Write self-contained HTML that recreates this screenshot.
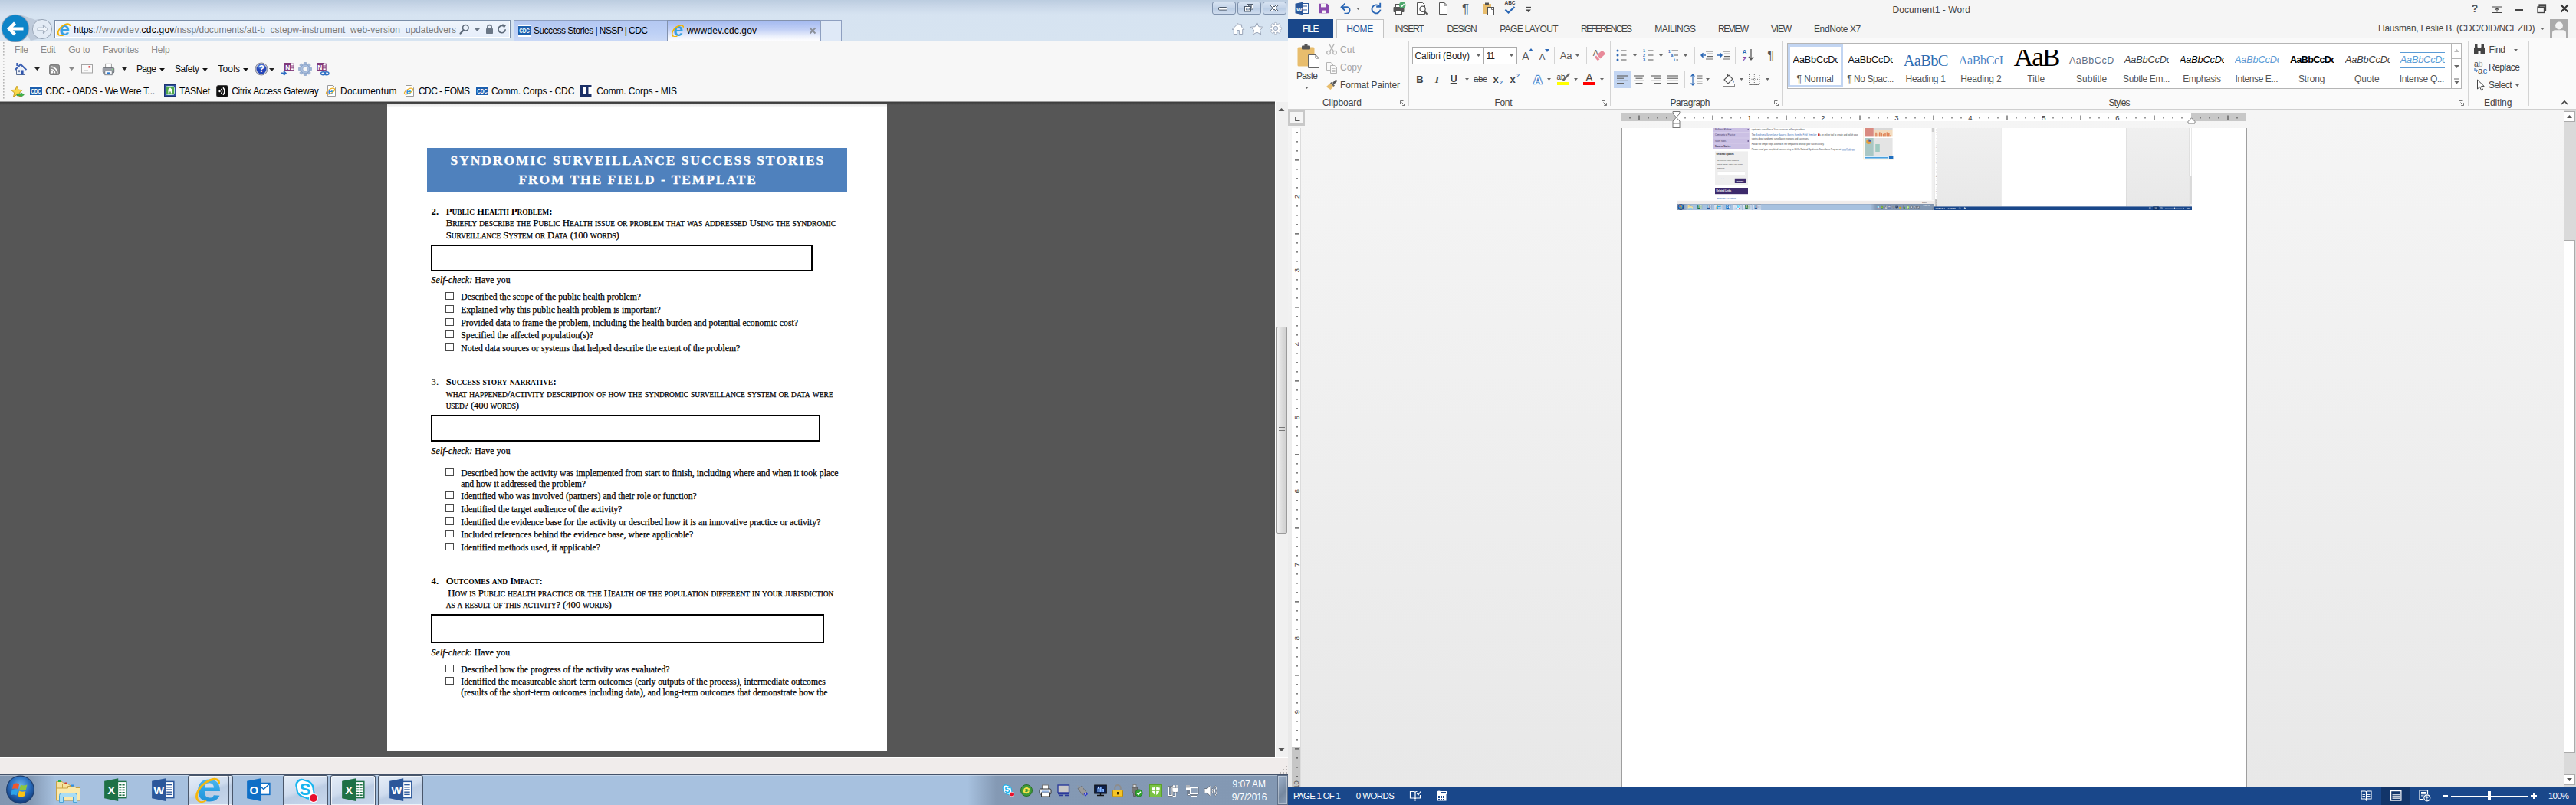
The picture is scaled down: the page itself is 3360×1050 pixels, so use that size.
<!DOCTYPE html>
<html><head><meta charset="utf-8"><title>Desktop</title>
<style>
html,body{margin:0;padding:0;}
body{width:3360px;height:1050px;position:relative;overflow:hidden;background:#fff;font-family:"Liberation Sans",sans-serif;}
.a{position:absolute;display:block;}
.t{white-space:pre;}
</style></head><body>
<div class="a" style="left:0px;top:0px;width:3360px;height:1050px;background:#fff;"></div>
<div class="a" style="left:0px;top:0px;width:1680px;height:53px;background:linear-gradient(#bccde0 0px,#cad8e9 9px,#d6e3f1 19px,#d7e4f1 53px);"></div>
<div class="a" style="left:0px;top:53px;width:1680px;height:1px;background:#8d9bb2;"></div>
<div class="a" style="left:0px;top:54px;width:1680px;height:79px;background:#f7f7f7;"></div>
<div class="a" style="left:1581px;top:2px;width:31px;height:17px;background:linear-gradient(#d6e2f1,#c3d3e8 50%,#b9cce4 51%,#cfdcee);border:1px solid #7f92ad;box-sizing:border-box;border-radius:3px;"></div>
<div class="a" style="left:1614px;top:2px;width:31px;height:17px;background:linear-gradient(#d6e2f1,#c3d3e8 50%,#b9cce4 51%,#cfdcee);border:1px solid #7f92ad;box-sizing:border-box;border-radius:3px;"></div>
<div class="a" style="left:1647px;top:2px;width:31px;height:17px;background:linear-gradient(#d6e2f1,#c3d3e8 50%,#b9cce4 51%,#cfdcee);border:1px solid #7f92ad;box-sizing:border-box;border-radius:3px;"></div>
<svg class="a" style="left:1589px;top:7px;" width="14" height="8" viewBox="0 0 14 8"><rect x="0.5" y="2.5" width="11" height="3.6" rx="1" fill="#fff" stroke="#4d5a6b"/></svg>
<svg class="a" style="left:1623px;top:4px;" width="14" height="13" viewBox="0 0 14 13"><rect x="3.5" y="1.5" width="8" height="6.5" fill="#fff" stroke="#4d5a6b"/><rect x="5.6" y="3.6" width="3.8" height="2.3" fill="#c3d3e8" stroke="#4d5a6b" stroke-width=".6"/><rect x="0.5" y="4.5" width="8" height="6.5" fill="#fff" stroke="#4d5a6b"/><rect x="2.6" y="6.8" width="3.8" height="2.2" fill="#c3d3e8" stroke="#4d5a6b" stroke-width=".6"/></svg>
<svg class="a" style="left:1655px;top:5px;" width="14" height="11" viewBox="0 0 14 11"><path d="M1.5 1.5H4.6L7 4 9.4 1.5H12.5L8.8 5.5 12.5 9.5H9.4L7 7 4.6 9.5H1.5L5.2 5.5Z" fill="#fff" stroke="#4d5a6b" stroke-linejoin="round"/></svg>
<svg class="a" style="left:0px;top:17px;" width="72" height="38" viewBox="0 0 72 38"><path d="M20 2 C30 2 38 6 46 9 C52 7 60 8 66 13 L66 30 L40 36 Z" fill="#b7c3d3" opacity=".75"/><circle cx="20" cy="20" r="18.3" fill="#8fa3bb"/><circle cx="20" cy="20" r="17.3" fill="#0d84c8"/><path d="M30.5 20.5H12.5M19.5 13L12 20.5L19.5 28" fill="none" stroke="#fff" stroke-width="4.2" stroke-linecap="butt" stroke-linejoin="miter"/><circle cx="55" cy="21" r="12.6" fill="#e3ebf5" stroke="#9aa7b8" stroke-width="1"/><path d="M49 21H60.5M56 16L61 21L56 26" fill="none" stroke="#9aa7b8" stroke-width="1.3"/><path d="M49 19.2H56.5V15.2L62.3 21L56.5 26.8V22.8H49Z" fill="#eef3f9" stroke="#a3afbf" stroke-width="1"/></svg>
<div class="a" style="left:71px;top:26px;width:595px;height:24px;background:#eaf1fb;border:1px solid #7b8ea8;box-sizing:border-box;"></div>
<div class="a" style="left:72px;top:27px;width:593px;height:22px;background:linear-gradient(#eef4fc,#e6eefa);border:1px solid #fff;box-sizing:border-box;"></div>
<svg class="a" style="left:74.5px;top:29.5px;" width="17" height="17" viewBox="0 0 16 16"><text x="8.600" y="15" text-anchor="middle" font-family="Liberation Sans, sans-serif" font-weight="700" font-size="23" fill="#3aa0e2">e</text><path d="M2.400 15.300C-1.800 12.500 2.500 4.500 9 1.800C12.500 .400 15.600 1 15.500 3.800" fill="none" stroke="#f5b400" stroke-width="1.600"/><path d="M2.400 15.300C4 16.200 6 15.600 7.500 14.800" fill="none" stroke="#f5b400" stroke-width="1.200"/></svg>
<span class="a t" style="left:96.20px;top:32.00px;line-height:16px;font:400 12px 'Liberation Sans', sans-serif;color:#000;letter-spacing:-0.229px;">https</span>
<span class="a t" style="left:121.30px;top:32.00px;line-height:16px;font:400 12px 'Liberation Sans', sans-serif;color:#7a7a7a;letter-spacing:0.600px;">://wwwdev.</span>
<span class="a t" style="left:184.50px;top:32.00px;line-height:16px;font:400 12px 'Liberation Sans', sans-serif;color:#000;letter-spacing:0.240px;">cdc.gov</span>
<span class="a t" style="left:227.30px;top:32.00px;line-height:16px;font:400 12px 'Liberation Sans', sans-serif;color:#7a7a7a;letter-spacing:0.024px;">/nssp/documents/att-b_cstepw-instrument_web-version_updatedvers</span>
<svg class="a" style="left:599px;top:31px;" width="14" height="14" viewBox="0 0 14 14"><circle cx="8.3" cy="5.3" r="3.8" fill="none" stroke="#5e6b7a" stroke-width="1.6"/><path d="M5.6 8.2L1.6 12.6" stroke="#5e6b7a" stroke-width="2.2" stroke-linecap="round"/></svg>
<svg class="a" style="left:619.0px;top:36.5px;" width="7" height="4" viewBox="0 0 7 4"><path d="M0 0H7L3.5 4Z" fill="#6b7786"/></svg>
<svg class="a" style="left:633px;top:31px;" width="11" height="14" viewBox="0 0 11 14"><path d="M2.8 6.5V4.3A2.7 2.7 0 0 1 8.2 4.3V6.5" fill="none" stroke="#6b7786" stroke-width="1.6"/><rect x="1" y="6" width="9" height="7" rx=".8" fill="#6b7786"/></svg>
<svg class="a" style="left:648px;top:31px;" width="14" height="14" viewBox="0 0 14 14"><path d="M11.2 7.2A4.6 4.6 0 1 1 8.8 3.1" fill="none" stroke="#5e6b7a" stroke-width="1.7"/><path d="M7.2 0.2L12.3 1.6 9.3 6Z" fill="#5e6b7a"/></svg>
<div class="a" style="left:670px;top:26px;width:201px;height:27px;background:linear-gradient(#b4c8f2,#bdd0f5 60%,#c9d8f6);border:1px solid #8e9fc0;box-sizing:border-box;border-bottom:none;"></div>
<div class="a" style="left:676px;top:32px;width:16px;height:16px;background:#fff;"></div>
<div class="a" style="left:676px;top:34px;width:16px;height:11px;background:#1c5fae;"></div>
<svg class="a" style="left:676px;top:34px;" width="16" height="11" viewBox="0 0 16 11"><text x="1.200" y="8.700" textLength="13.600" lengthAdjust="spacingAndGlyphs" font-family="Liberation Sans, sans-serif" font-weight="700" font-size="9.500" fill="#fff">CDC</text></svg>
<span class="a t" style="left:696.00px;top:33.00px;line-height:16px;font:400 12px 'Liberation Sans', sans-serif;color:#000;letter-spacing:-0.558px;">Success Stories | NSSP | CDC</span>
<div class="a" style="left:870px;top:26px;width:201px;height:27px;background:linear-gradient(#a3b9f0 0,#c3d1f6 45%,#eef2fc 80%,#fdfdff 100%);border:1px solid #8392ad;box-sizing:border-box;border-bottom:none;"></div>
<svg class="a" style="left:876.0px;top:32.0px;" width="16" height="16" viewBox="0 0 16 16"><text x="8.600" y="15" text-anchor="middle" font-family="Liberation Sans, sans-serif" font-weight="700" font-size="23" fill="#3aa0e2">e</text><path d="M2.400 15.300C-1.800 12.500 2.500 4.500 9 1.800C12.500 .400 15.600 1 15.500 3.800" fill="none" stroke="#f5b400" stroke-width="1.600"/><path d="M2.400 15.300C4 16.200 6 15.600 7.500 14.800" fill="none" stroke="#f5b400" stroke-width="1.200"/></svg>
<span class="a t" style="left:896.00px;top:33.00px;line-height:16px;font:400 12px 'Liberation Sans', sans-serif;color:#000;letter-spacing:0.142px;">wwwdev.cdc.gov</span>
<svg class="a" style="left:1055px;top:35px;" width="10" height="10" viewBox="0 0 10 10"><path d="M1.5 1.5L8.5 8.5M8.5 1.5L1.5 8.5" stroke="#8a8f98" stroke-width="1.8"/></svg>
<div class="a" style="left:1070px;top:26px;width:28px;height:27px;background:#dfe9f7;border:1px solid #8e9fc0;box-sizing:border-box;border-bottom:none;"></div>
<svg class="a" style="left:1606px;top:29px;" width="18" height="17" viewBox="0 0 18 17"><path d="M9 1.500L1.200 9.300H3.300V15.500H7.600V10.500H10.400V15.500H14.700V9.300H16.800L13.600 6.100V3H11.800V4.300Z" fill="#fff" stroke="#9aa5b8" stroke-width="1" stroke-linejoin="round"/></svg>
<svg class="a" style="left:1630px;top:28px;" width="19" height="18" viewBox="0 0 19 18"><path d="M9.500 1.300L11.900 6.700 17.800 7.300 13.400 11.200 14.700 17 9.500 14 4.300 17 5.600 11.200 1.200 7.300 7.100 6.700Z" fill="#fff" stroke="#9aa5b8" stroke-width="1" stroke-linejoin="round"/></svg>
<svg class="a" style="left:1655px;top:28px;" width="18" height="18" viewBox="0 0 18 18"><rect x="7.300" y="1.400" width="3.400" height="4" rx="1.200" transform="rotate(0 9 9)" fill="#fff" stroke="#9aa5b8" stroke-width=".9"/><rect x="7.300" y="1.400" width="3.400" height="4" rx="1.200" transform="rotate(45 9 9)" fill="#fff" stroke="#9aa5b8" stroke-width=".9"/><rect x="7.300" y="1.400" width="3.400" height="4" rx="1.200" transform="rotate(90 9 9)" fill="#fff" stroke="#9aa5b8" stroke-width=".9"/><rect x="7.300" y="1.400" width="3.400" height="4" rx="1.200" transform="rotate(135 9 9)" fill="#fff" stroke="#9aa5b8" stroke-width=".9"/><rect x="7.300" y="1.400" width="3.400" height="4" rx="1.200" transform="rotate(180 9 9)" fill="#fff" stroke="#9aa5b8" stroke-width=".9"/><rect x="7.300" y="1.400" width="3.400" height="4" rx="1.200" transform="rotate(225 9 9)" fill="#fff" stroke="#9aa5b8" stroke-width=".9"/><rect x="7.300" y="1.400" width="3.400" height="4" rx="1.200" transform="rotate(270 9 9)" fill="#fff" stroke="#9aa5b8" stroke-width=".9"/><rect x="7.300" y="1.400" width="3.400" height="4" rx="1.200" transform="rotate(315 9 9)" fill="#fff" stroke="#9aa5b8" stroke-width=".9"/><circle cx="9" cy="9" r="5.700" fill="#fff" stroke="#9aa5b8" stroke-width=".9"/><rect x="7.800" y="1.900" width="2.400" height="4" transform="rotate(0 9 9)" fill="#fff"/><rect x="7.800" y="1.900" width="2.400" height="4" transform="rotate(45 9 9)" fill="#fff"/><rect x="7.800" y="1.900" width="2.400" height="4" transform="rotate(90 9 9)" fill="#fff"/><rect x="7.800" y="1.900" width="2.400" height="4" transform="rotate(135 9 9)" fill="#fff"/><rect x="7.800" y="1.900" width="2.400" height="4" transform="rotate(180 9 9)" fill="#fff"/><rect x="7.800" y="1.900" width="2.400" height="4" transform="rotate(225 9 9)" fill="#fff"/><rect x="7.800" y="1.900" width="2.400" height="4" transform="rotate(270 9 9)" fill="#fff"/><rect x="7.800" y="1.900" width="2.400" height="4" transform="rotate(315 9 9)" fill="#fff"/><circle cx="9" cy="9" r="2.700" fill="#dce6f4" stroke="#9aa5b8" stroke-width=".9"/></svg>
<svg class="a" style="left:4px;top:55px;" width="3" height="76" viewBox="0 0 3 76"><rect x="0" y="0" width="1.6" height="1.6" fill="#b5b5b5"/><rect x="0" y="4" width="1.6" height="1.6" fill="#b5b5b5"/><rect x="0" y="8" width="1.6" height="1.6" fill="#b5b5b5"/><rect x="0" y="12" width="1.6" height="1.6" fill="#b5b5b5"/><rect x="0" y="16" width="1.6" height="1.6" fill="#b5b5b5"/><rect x="0" y="20" width="1.6" height="1.6" fill="#b5b5b5"/><rect x="0" y="24" width="1.6" height="1.6" fill="#b5b5b5"/><rect x="0" y="28" width="1.6" height="1.6" fill="#b5b5b5"/><rect x="0" y="32" width="1.6" height="1.6" fill="#b5b5b5"/><rect x="0" y="36" width="1.6" height="1.6" fill="#b5b5b5"/><rect x="0" y="40" width="1.6" height="1.6" fill="#b5b5b5"/><rect x="0" y="44" width="1.6" height="1.6" fill="#b5b5b5"/><rect x="0" y="48" width="1.6" height="1.6" fill="#b5b5b5"/><rect x="0" y="52" width="1.6" height="1.6" fill="#b5b5b5"/><rect x="0" y="56" width="1.6" height="1.6" fill="#b5b5b5"/><rect x="0" y="60" width="1.6" height="1.6" fill="#b5b5b5"/><rect x="0" y="64" width="1.6" height="1.6" fill="#b5b5b5"/><rect x="0" y="68" width="1.6" height="1.6" fill="#b5b5b5"/><rect x="0" y="72" width="1.6" height="1.6" fill="#b5b5b5"/></svg>
<span class="a t" style="left:19.00px;top:58.00px;line-height:16px;font:400 12px 'Liberation Sans', sans-serif;color:#8b8b8b;letter-spacing:-0.448px;">File</span>
<span class="a t" style="left:53.00px;top:58.00px;line-height:16px;font:400 12px 'Liberation Sans', sans-serif;color:#8b8b8b;letter-spacing:-0.329px;">Edit</span>
<span class="a t" style="left:89.30px;top:58.00px;line-height:16px;font:400 12px 'Liberation Sans', sans-serif;color:#8b8b8b;letter-spacing:-0.315px;">Go to</span>
<span class="a t" style="left:134.30px;top:58.00px;line-height:16px;font:400 12px 'Liberation Sans', sans-serif;color:#8b8b8b;letter-spacing:-0.332px;">Favorites</span>
<span class="a t" style="left:197.30px;top:58.00px;line-height:16px;font:400 12px 'Liberation Sans', sans-serif;color:#8b8b8b;letter-spacing:-0.096px;">Help</span>
<svg class="a" style="left:18px;top:81px;" width="18" height="18" viewBox="0 0 18 18"><path d="M3.500 9V16.500H14.500V9L9 3.500Z" fill="#eef1f7" stroke="#5b6f96" stroke-width="1"/><path d="M9 1.400L.800 9.600 2.200 10.800 9 4.200 15.800 10.800 17.200 9.600Z" fill="#3d62b5"/><rect x="3.300" y="1" width="2.200" height="4" fill="#3d62b5"/><rect x="9.800" y="10.500" width="2.800" height="6" fill="#2f55ad"/><rect x="5.300" y="10.300" width="2.800" height="2.800" fill="#6f83ad"/></svg>
<svg class="a" style="left:44.5px;top:88.0px;" width="7" height="4" viewBox="0 0 7 4"><path d="M0 0H7L3.5 4Z" fill="#222"/></svg>
<svg class="a" style="left:64px;top:83.5px;" width="14" height="14" viewBox="0 0 16 16"><rect x=".5" y=".5" width="15" height="15" rx="2.5" fill="#8d8d8d" stroke="#6f6f6f"/><circle cx="4.3" cy="11.8" r="1.7" fill="#fff"/><path d="M2.8 7.4A5.8 5.8 0 0 1 8.7 13.2M2.8 3.6A9.6 9.6 0 0 1 12.5 13.2" fill="none" stroke="#fff" stroke-width="1.8"/></svg>
<svg class="a" style="left:89.5px;top:88.0px;" width="7" height="4" viewBox="0 0 7 4"><path d="M0 0H7L3.5 4Z" fill="#8a8a8a"/></svg>
<svg class="a" style="left:106px;top:84px;" width="15" height="12" viewBox="0 0 15 12"><rect x=".5" y=".5" width="14" height="10.5" fill="#fafafa" stroke="#a5a5a5"/><rect x="9.5" y="2" width="2.6" height="2.6" fill="#e25555"/><path d="M3 8H9" stroke="#bbb"/></svg>
<svg class="a" style="left:132.5px;top:82px;" width="17" height="17" viewBox="0 0 20 20"><rect x="5.5" y="1.5" width="9" height="7" fill="#fff" stroke="#8a8a8a"/><rect x="1.5" y="7.5" width="17" height="8" rx="1.5" fill="#9a9ea6" stroke="#5f646c"/><rect x="4.5" y="12.5" width="11" height="6" fill="#fff" stroke="#6e737b"/><rect x="7" y="14.5" width="6" height="2.2" fill="#2d7ad1"/><circle cx="16" cy="10" r=".9" fill="#7fe07f"/></svg>
<svg class="a" style="left:158.5px;top:88.0px;" width="7" height="4" viewBox="0 0 7 4"><path d="M0 0H7L3.5 4Z" fill="#222"/></svg>
<span class="a t" style="left:178.00px;top:83.00px;line-height:16px;font:400 12px 'Liberation Sans', sans-serif;color:#111;letter-spacing:-0.677px;">Page</span>
<svg class="a" style="left:207.8px;top:88.5px;" width="7" height="4" viewBox="0 0 7 4"><path d="M0 0H7L3.5 4Z" fill="#111"/></svg>
<span class="a t" style="left:228.00px;top:83.00px;line-height:16px;font:400 12px 'Liberation Sans', sans-serif;color:#111;letter-spacing:-0.406px;">Safety</span>
<svg class="a" style="left:263.9px;top:88.5px;" width="7" height="4" viewBox="0 0 7 4"><path d="M0 0H7L3.5 4Z" fill="#111"/></svg>
<span class="a t" style="left:284.30px;top:83.00px;line-height:16px;font:400 12px 'Liberation Sans', sans-serif;color:#111;letter-spacing:0.171px;">Tools</span>
<svg class="a" style="left:316.5px;top:88.5px;" width="7" height="4" viewBox="0 0 7 4"><path d="M0 0H7L3.5 4Z" fill="#111"/></svg>
<svg class="a" style="left:332px;top:81px;" width="18" height="18" viewBox="0 0 18 18"><circle cx="9" cy="9" r="8" fill="#c9ccd6" stroke="#85889a" stroke-width="1"/><circle cx="9" cy="9" r="6.500" fill="#2446b8"/><ellipse cx="9" cy="6" rx="4.800" ry="3" fill="#5f86e0" opacity=".7"/><text x="9" y="13.4" text-anchor="middle" font-family="Liberation Sans, sans-serif" font-weight="700" font-size="12.5" fill="#fff">?</text></svg>
<svg class="a" style="left:351.0px;top:88.5px;" width="7" height="4" viewBox="0 0 7 4"><path d="M0 0H7L3.5 4Z" fill="#222"/></svg>
<svg class="a" style="left:366px;top:81px;" width="18" height="19" viewBox="0 0 18 19"><rect x="5" y="1" width="9" height="11" fill="#80397b"/><rect x="13" y="2.2" width="4.2" height="8.4" fill="#fff" stroke="#80397b" stroke-width="1"/><path d="M13 5H17M13 7.8H17" stroke="#80397b"/><text x="9.4" y="10" text-anchor="middle" font-family="Liberation Sans, sans-serif" font-weight="700" font-size="8.5" fill="#fff">N</text><path d="M0.5 14.5H6M4 11.8L6.8 14.5 4 17.2" fill="none" stroke="#2f6fc4" stroke-width="1.8"/></svg>
<svg class="a" style="left:389px;top:81px;" width="18" height="18" viewBox="0 0 18 18"><rect x="7.3" y="0.3" width="3.4" height="4" rx=".6" transform="rotate(0 9 9)" fill="#9db4d6" stroke="#7f98bf" stroke-width=".5"/><rect x="7.3" y="0.3" width="3.4" height="4" rx=".6" transform="rotate(45 9 9)" fill="#9db4d6" stroke="#7f98bf" stroke-width=".5"/><rect x="7.3" y="0.3" width="3.4" height="4" rx=".6" transform="rotate(90 9 9)" fill="#9db4d6" stroke="#7f98bf" stroke-width=".5"/><rect x="7.3" y="0.3" width="3.4" height="4" rx=".6" transform="rotate(135 9 9)" fill="#9db4d6" stroke="#7f98bf" stroke-width=".5"/><rect x="7.3" y="0.3" width="3.4" height="4" rx=".6" transform="rotate(180 9 9)" fill="#9db4d6" stroke="#7f98bf" stroke-width=".5"/><rect x="7.3" y="0.3" width="3.4" height="4" rx=".6" transform="rotate(225 9 9)" fill="#9db4d6" stroke="#7f98bf" stroke-width=".5"/><rect x="7.3" y="0.3" width="3.4" height="4" rx=".6" transform="rotate(270 9 9)" fill="#9db4d6" stroke="#7f98bf" stroke-width=".5"/><rect x="7.3" y="0.3" width="3.4" height="4" rx=".6" transform="rotate(315 9 9)" fill="#9db4d6" stroke="#7f98bf" stroke-width=".5"/><circle cx="9" cy="9" r="5.8" fill="#a9bedd" stroke="#7f98bf" stroke-width=".6"/><circle cx="9" cy="9" r="3.1" fill="#f7f7f7" stroke="#7f98bf" stroke-width=".6"/></svg>
<svg class="a" style="left:412px;top:81px;" width="19" height="19" viewBox="0 0 19 19"><rect x="1" y="1" width="9" height="11" fill="#80397b"/><rect x="9" y="2.2" width="4.2" height="8.4" fill="#fff" stroke="#80397b" stroke-width="1"/><path d="M9 5H13M9 7.8H13" stroke="#80397b"/><text x="5.4" y="10" text-anchor="middle" font-family="Liberation Sans, sans-serif" font-weight="700" font-size="8.5" fill="#fff">N</text><ellipse cx="9.6" cy="14.8" rx="3" ry="2" fill="none" stroke="#2f6fc4" stroke-width="1.4"/><ellipse cx="14" cy="14.8" rx="3" ry="2" fill="none" stroke="#2f6fc4" stroke-width="1.4"/></svg>
<svg class="a" style="left:14px;top:111px;" width="18" height="18" viewBox="0 0 18 18"><path d="M8 1.2L10 6.2 15.2 6.6 11.2 10 12.5 15.2 8 12.4 3.5 15.2 4.8 10 0.8 6.6 6 6.2Z" fill="#f9d84a" stroke="#c79a1a" stroke-width="1"/><path d="M8 11.4H13V9.4L17.4 12.6 13 15.8V13.8H8Z" fill="#3fb54a" stroke="#2a8a34" stroke-width=".6"/></svg>
<div class="a" style="left:39px;top:111px;width:16px;height:16px;background:#fff;"></div>
<div class="a" style="left:39px;top:113px;width:16px;height:11px;background:#1c5fae;"></div>
<svg class="a" style="left:39px;top:113px;" width="16" height="11" viewBox="0 0 16 11"><text x="1.200" y="8.700" textLength="13.600" lengthAdjust="spacingAndGlyphs" font-family="Liberation Sans, sans-serif" font-weight="700" font-size="9.500" fill="#fff">CDC</text></svg>
<span class="a t" style="left:59.30px;top:112.00px;line-height:16px;font:400 12px 'Liberation Sans', sans-serif;color:#000;letter-spacing:-0.305px;">CDC - OADS - We Were T...</span>
<svg class="a" style="left:214px;top:110px;" width="16" height="16" viewBox="0 0 16 16"><rect x=".5" y=".5" width="15" height="15" fill="#2e4d9e" stroke="#1d3370"/><rect x="2.5" y="2.5" width="11" height="11" rx="2" fill="#4ea64a" stroke="#dfe" stroke-width=".8"/><path d="M8 4.2L4.2 8H5.4V11.6H7.2V9.4H8.8V11.6H10.6V8H11.8Z" fill="#fff"/></svg>
<span class="a t" style="left:234.00px;top:112.00px;line-height:16px;font:400 12px 'Liberation Sans', sans-serif;color:#000;letter-spacing:-0.225px;">TASNet</span>
<svg class="a" style="left:281.5px;top:110.5px;" width="16" height="16" viewBox="0 0 16 16"><rect x=".5" y=".5" width="15" height="15" rx="2.5" fill="#111" stroke="#444"/><circle cx="4.5" cy="8" r="1.2" fill="#fff"/><path d="M6.4 5A4.4 4.4 0 0 1 6.4 11M9 3.2A7.2 7.2 0 0 1 9 12.8" fill="none" stroke="#fff" stroke-width="1.5"/></svg>
<span class="a t" style="left:302.20px;top:112.00px;line-height:16px;font:400 12px 'Liberation Sans', sans-serif;color:#000;letter-spacing:-0.294px;">Citrix Access Gateway</span>
<svg class="a" style="left:424px;top:110.0px;" width="16" height="17" viewBox="0 0 16 17"><path d="M3.5 1.5H10.5L13.5 4.5V15.5H3.5Z" fill="#fff" stroke="#9a9a9a"/><ellipse cx="7" cy="9" rx="6.2" ry="2.6" transform="rotate(-32 7 9)" fill="none" stroke="#f0b323" stroke-width="1.2"/><text x="7" y="13" text-anchor="middle" font-family="Liberation Sans, sans-serif" font-weight="700" font-size="11.5" fill="#2d8fd8">e</text></svg>
<span class="a t" style="left:444.00px;top:112.00px;line-height:16px;font:400 12px 'Liberation Sans', sans-serif;color:#000;letter-spacing:0.225px;">Documentum</span>
<svg class="a" style="left:526px;top:110.0px;" width="16" height="17" viewBox="0 0 16 17"><path d="M3.5 1.5H10.5L13.5 4.5V15.5H3.5Z" fill="#fff" stroke="#9a9a9a"/><ellipse cx="7" cy="9" rx="6.2" ry="2.6" transform="rotate(-32 7 9)" fill="none" stroke="#f0b323" stroke-width="1.2"/><text x="7" y="13" text-anchor="middle" font-family="Liberation Sans, sans-serif" font-weight="700" font-size="11.5" fill="#2d8fd8">e</text></svg>
<span class="a t" style="left:546.00px;top:112.00px;line-height:16px;font:400 12px 'Liberation Sans', sans-serif;color:#000;letter-spacing:-0.556px;">CDC - EOMS</span>
<div class="a" style="left:620.6px;top:111px;width:16px;height:16px;background:#fff;"></div>
<div class="a" style="left:620.6px;top:113px;width:16px;height:11px;background:#1c5fae;"></div>
<svg class="a" style="left:620.6px;top:113px;" width="16" height="11" viewBox="0 0 16 11"><text x="1.200" y="8.700" textLength="13.600" lengthAdjust="spacingAndGlyphs" font-family="Liberation Sans, sans-serif" font-weight="700" font-size="9.500" fill="#fff">CDC</text></svg>
<span class="a t" style="left:641.00px;top:112.00px;line-height:16px;font:400 12px 'Liberation Sans', sans-serif;color:#000;letter-spacing:-0.148px;">Comm. Corps - CDC</span>
<svg class="a" style="left:757px;top:111px;" width="16" height="15" viewBox="0 0 16 15"><rect width="16" height="15" fill="#fff"/><path d="M7 1.500H1.500V13.500H7M14.500 1.500H9V13.500H14.500" fill="none" stroke="#1b2f66" stroke-width="3"/><rect x="5" y="5.500" width="2.500" height="4" fill="#fff"/><rect x="12.500" y="5.500" width="3" height="4" fill="#fff"/></svg>
<span class="a t" style="left:778.30px;top:112.00px;line-height:16px;font:400 12px 'Liberation Sans', sans-serif;color:#000;letter-spacing:-0.082px;">Comm. Corps - MIS</span>
<div class="a" style="left:0px;top:133px;width:1663px;height:854px;background:#565656;"></div>
<div class="a" style="left:0px;top:132px;width:1663px;height:1px;background:#9c9c9c;"></div>
<div class="a" style="left:0px;top:133px;width:1663px;height:4px;background:linear-gradient(#3c3c3c,#565656);"></div>
<div class="a" style="left:505px;top:136px;width:652px;height:843px;background:#fff;"></div>
<div class="a" style="left:505px;top:136px;width:652px;height:4px;background:linear-gradient(#e4e4e4,#fff);"></div>
<div class="a" style="left:557px;top:193px;width:548px;height:58px;background:#4f81bd;"></div>
<span class="a t" style="left:587.50px;top:199.00px;line-height:22px;font:700 17.5px 'Liberation Serif', serif;color:#fff;letter-spacing:1.919px;-webkit-text-stroke:0.3px #fff;">SYNDROMIC SURVEILLANCE SUCCESS STORIES</span>
<span class="a t" style="left:676.40px;top:224.00px;line-height:22px;font:700 17.5px 'Liberation Serif', serif;color:#fff;letter-spacing:1.921px;-webkit-text-stroke:0.3px #fff;">FROM THE FIELD - TEMPLATE</span>
<span class="a t" style="left:562.60px;top:269.00px;line-height:16px;font:700 12.8px 'Liberation Serif', serif;color:#000;">2.</span>
<span class="a t" style="left:581.70px;top:269.00px;line-height:16px;font:700 12.8px 'Liberation Serif', serif;color:#000;letter-spacing:-0.093px;">P<span style="font-size:74%">UBLIC</span> H<span style="font-size:74%">EALTH</span> P<span style="font-size:74%">ROBLEM</span>:</span>
<span class="a t" style="left:581.70px;top:284.00px;line-height:16px;font:400 12.8px 'Liberation Serif', serif;color:#000;letter-spacing:-0.045px;-webkit-text-stroke:0.25px currentColor;">B<span style="font-size:74%">RIEFLY</span> <span style="font-size:74%">DESCRIBE</span> <span style="font-size:74%">THE</span> P<span style="font-size:74%">UBLIC</span> H<span style="font-size:74%">EALTH</span> <span style="font-size:74%">ISSUE</span> <span style="font-size:74%">OR</span> <span style="font-size:74%">PROBLEM</span> <span style="font-size:74%">THAT</span> <span style="font-size:74%">WAS</span> <span style="font-size:74%">ADDRESSED</span> U<span style="font-size:74%">SING</span> <span style="font-size:74%">THE</span> <span style="font-size:74%">SYNDROMIC</span></span>
<span class="a t" style="left:581.70px;top:300.00px;line-height:16px;font:400 12.8px 'Liberation Serif', serif;color:#000;letter-spacing:-0.099px;-webkit-text-stroke:0.25px currentColor;">S<span style="font-size:74%">URVEILLANCE</span> S<span style="font-size:74%">YSTEM</span> <span style="font-size:74%">OR</span> D<span style="font-size:74%">ATA</span> (100 <span style="font-size:74%">WORDS</span>)</span>
<div class="a" style="left:562px;top:319px;width:498px;height:35px;border:2px solid #000;box-sizing:border-box;"></div>
<span class="a t" style="left:562.60px;top:359.00px;line-height:14px;font:400 11.7px 'Liberation Serif', serif;color:#000;letter-spacing:0.160px;-webkit-text-stroke:0.25px currentColor;"><i>Self-check:</i> Have you</span>
<div class="a" style="left:581px;top:381px;width:11px;height:10px;background:#fff;border:1px solid #4a4a4a;box-sizing:border-box;"></div>
<span class="a t" style="left:601.30px;top:381.00px;line-height:14px;font:400 11.7px 'Liberation Serif', serif;color:#000;letter-spacing:0.001px;-webkit-text-stroke:0.25px currentColor;">Described the scope of the public health problem?</span>
<div class="a" style="left:581px;top:398px;width:11px;height:10px;background:#fff;border:1px solid #4a4a4a;box-sizing:border-box;"></div>
<span class="a t" style="left:601.30px;top:398.00px;line-height:14px;font:400 11.7px 'Liberation Serif', serif;color:#000;letter-spacing:0.008px;-webkit-text-stroke:0.25px currentColor;">Explained why this public health problem is important?</span>
<div class="a" style="left:581px;top:415px;width:11px;height:10px;background:#fff;border:1px solid #4a4a4a;box-sizing:border-box;"></div>
<span class="a t" style="left:601.30px;top:415.00px;line-height:14px;font:400 11.7px 'Liberation Serif', serif;color:#000;letter-spacing:0.009px;-webkit-text-stroke:0.25px currentColor;">Provided data to frame the problem, including the health burden and potential economic cost?</span>
<div class="a" style="left:581px;top:431px;width:11px;height:10px;background:#fff;border:1px solid #4a4a4a;box-sizing:border-box;"></div>
<span class="a t" style="left:601.30px;top:431.00px;line-height:14px;font:400 11.7px 'Liberation Serif', serif;color:#000;letter-spacing:0.014px;-webkit-text-stroke:0.25px currentColor;">Specified the affected population(s)?</span>
<div class="a" style="left:581px;top:448px;width:11px;height:10px;background:#fff;border:1px solid #4a4a4a;box-sizing:border-box;"></div>
<span class="a t" style="left:601.30px;top:448.00px;line-height:14px;font:400 11.7px 'Liberation Serif', serif;color:#000;letter-spacing:0.005px;-webkit-text-stroke:0.25px currentColor;">Noted data sources or systems that helped describe the extent of the problem?</span>
<span class="a t" style="left:562.60px;top:491.00px;line-height:16px;font:400 12.8px 'Liberation Serif', serif;color:#000;">3.</span>
<span class="a t" style="left:581.70px;top:491.00px;line-height:16px;font:700 12.8px 'Liberation Serif', serif;color:#000;letter-spacing:0.002px;">S<span style="font-size:74%">UCCESS</span> <span style="font-size:74%">STORY</span> <span style="font-size:74%">NARRATIVE</span>:</span>
<span class="a t" style="left:581.70px;top:507.00px;line-height:16px;font:400 12.8px 'Liberation Serif', serif;color:#000;letter-spacing:0.004px;-webkit-text-stroke:0.25px currentColor;"><span style="font-size:74%">WHAT</span> <span style="font-size:74%">HAPPENED</span>/<span style="font-size:74%">ACTIVITY</span> <span style="font-size:74%">DESCRIPTION</span> <span style="font-size:74%">OF</span> <span style="font-size:74%">HOW</span> <span style="font-size:74%">THE</span> <span style="font-size:74%">SYNDROMIC</span> <span style="font-size:74%">SURVEILLANCE</span> <span style="font-size:74%">SYSTEM</span> <span style="font-size:74%">OR</span> <span style="font-size:74%">DATA</span> <span style="font-size:74%">WERE</span></span>
<span class="a t" style="left:581.70px;top:522.00px;line-height:16px;font:400 12.8px 'Liberation Serif', serif;color:#000;letter-spacing:-0.216px;-webkit-text-stroke:0.25px currentColor;"><span style="font-size:74%">USED</span>? (400 <span style="font-size:74%">WORDS</span>)</span>
<div class="a" style="left:562px;top:541px;width:508px;height:35px;border:2px solid #000;box-sizing:border-box;"></div>
<span class="a t" style="left:562.60px;top:582.00px;line-height:14px;font:400 11.7px 'Liberation Serif', serif;color:#000;letter-spacing:0.160px;-webkit-text-stroke:0.25px currentColor;"><i>Self-check:</i> Have you</span>
<div class="a" style="left:581px;top:611px;width:11px;height:10px;background:#fff;border:1px solid #4a4a4a;box-sizing:border-box;"></div>
<span class="a t" style="left:601.30px;top:611.00px;line-height:14px;font:400 11.7px 'Liberation Serif', serif;color:#000;letter-spacing:0.011px;-webkit-text-stroke:0.25px currentColor;">Described how the activity was implemented from start to finish, including where and when it took place</span>
<span class="a t" style="left:601.30px;top:625.00px;line-height:14px;font:400 11.7px 'Liberation Serif', serif;color:#000;letter-spacing:0.003px;-webkit-text-stroke:0.25px currentColor;">and how it addressed the problem?</span>
<div class="a" style="left:581px;top:641px;width:11px;height:10px;background:#fff;border:1px solid #4a4a4a;box-sizing:border-box;"></div>
<span class="a t" style="left:601.30px;top:641.00px;line-height:14px;font:400 11.7px 'Liberation Serif', serif;color:#000;letter-spacing:0.011px;-webkit-text-stroke:0.25px currentColor;">Identified who was involved (partners) and their role or function?</span>
<div class="a" style="left:581px;top:658px;width:11px;height:10px;background:#fff;border:1px solid #4a4a4a;box-sizing:border-box;"></div>
<span class="a t" style="left:601.30px;top:658.00px;line-height:14px;font:400 11.7px 'Liberation Serif', serif;color:#000;letter-spacing:0.013px;-webkit-text-stroke:0.25px currentColor;">Identified the target audience of the activity?</span>
<div class="a" style="left:581px;top:675px;width:11px;height:10px;background:#fff;border:1px solid #4a4a4a;box-sizing:border-box;"></div>
<span class="a t" style="left:601.30px;top:675.00px;line-height:14px;font:400 11.7px 'Liberation Serif', serif;color:#000;letter-spacing:0.011px;-webkit-text-stroke:0.25px currentColor;">Identified the evidence base for the activity or described how it is an innovative practice or activity?</span>
<div class="a" style="left:581px;top:691px;width:11px;height:10px;background:#fff;border:1px solid #4a4a4a;box-sizing:border-box;"></div>
<span class="a t" style="left:601.30px;top:691.00px;line-height:14px;font:400 11.7px 'Liberation Serif', serif;color:#000;letter-spacing:0.009px;-webkit-text-stroke:0.25px currentColor;">Included references behind the evidence base, where applicable?</span>
<div class="a" style="left:581px;top:708px;width:11px;height:10px;background:#fff;border:1px solid #4a4a4a;box-sizing:border-box;"></div>
<span class="a t" style="left:601.30px;top:708.00px;line-height:14px;font:400 11.7px 'Liberation Serif', serif;color:#000;letter-spacing:0.007px;-webkit-text-stroke:0.25px currentColor;">Identified methods used, if applicable?</span>
<span class="a t" style="left:562.60px;top:751.00px;line-height:16px;font:700 12.8px 'Liberation Serif', serif;color:#000;">4.</span>
<span class="a t" style="left:581.70px;top:751.00px;line-height:16px;font:700 12.8px 'Liberation Serif', serif;color:#000;letter-spacing:-0.102px;">O<span style="font-size:74%">UTCOMES</span> <span style="font-size:74%">AND</span> I<span style="font-size:74%">MPACT</span>:</span>
<span class="a t" style="left:584.30px;top:767.00px;line-height:16px;font:400 12.8px 'Liberation Serif', serif;color:#000;letter-spacing:-0.060px;-webkit-text-stroke:0.25px currentColor;">H<span style="font-size:74%">OW</span> <span style="font-size:74%">IS</span> P<span style="font-size:74%">UBLIC</span> <span style="font-size:74%">HEALTH</span> <span style="font-size:74%">PRACTICE</span> <span style="font-size:74%">OR</span> <span style="font-size:74%">THE</span> H<span style="font-size:74%">EALTH</span> <span style="font-size:74%">OF</span> <span style="font-size:74%">THE</span> <span style="font-size:74%">POPULATION</span> <span style="font-size:74%">DIFFERENT</span> <span style="font-size:74%">IN</span> <span style="font-size:74%">YOUR</span> <span style="font-size:74%">JURISDICTION</span></span>
<span class="a t" style="left:581.70px;top:782.00px;line-height:16px;font:400 12.8px 'Liberation Serif', serif;color:#000;letter-spacing:-0.142px;-webkit-text-stroke:0.25px currentColor;"><span style="font-size:74%">AS</span> <span style="font-size:74%">A</span> <span style="font-size:74%">RESULT</span> <span style="font-size:74%">OF</span> <span style="font-size:74%">THIS</span> <span style="font-size:74%">ACTIVITY</span>? (400 <span style="font-size:74%">WORDS</span>)</span>
<div class="a" style="left:562px;top:801px;width:513px;height:38px;border:2px solid #000;box-sizing:border-box;"></div>
<span class="a t" style="left:562.60px;top:845.00px;line-height:14px;font:400 11.7px 'Liberation Serif', serif;color:#000;letter-spacing:0.163px;-webkit-text-stroke:0.25px currentColor;"><i>Self-check</i>: Have you</span>
<div class="a" style="left:581px;top:867px;width:11px;height:10px;background:#fff;border:1px solid #4a4a4a;box-sizing:border-box;"></div>
<span class="a t" style="left:601.30px;top:867.00px;line-height:14px;font:400 11.7px 'Liberation Serif', serif;color:#000;letter-spacing:0.004px;-webkit-text-stroke:0.25px currentColor;">Described how the progress of the activity was evaluated?</span>
<div class="a" style="left:581px;top:883px;width:11px;height:10px;background:#fff;border:1px solid #4a4a4a;box-sizing:border-box;"></div>
<span class="a t" style="left:601.30px;top:883.00px;line-height:14px;font:400 11.7px 'Liberation Serif', serif;color:#000;letter-spacing:0.010px;-webkit-text-stroke:0.25px currentColor;">Identified the measureable short-term outcomes (early outputs of the process), intermediate outcomes</span>
<span class="a t" style="left:601.30px;top:897.00px;line-height:14px;font:400 11.7px 'Liberation Serif', serif;color:#000;letter-spacing:0.011px;-webkit-text-stroke:0.25px currentColor;">(results of the short-term outcomes including data), and long-term outcomes that demonstrate how the</span>
<div class="a" style="left:1663px;top:133px;width:17px;height:854px;background:#f0f0f0;"></div>
<div class="a" style="left:1663px;top:133px;width:1px;height:854px;background:#fff;"></div>
<svg class="a" style="left:1667px;top:140px;" width="9" height="6" viewBox="0 0 9 6"><path d="M0.5 5L4.5 1 8.5 5Z" fill="#555"/></svg>
<svg class="a" style="left:1667px;top:975px;" width="9" height="6" viewBox="0 0 9 6"><path d="M0.5 1L4.5 5 8.5 1Z" fill="#555"/></svg>
<div class="a" style="left:1665px;top:426px;width:14px;height:270px;background:linear-gradient(90deg,#f3f3f3,#dcdcdc 50%,#cfcfcf);border:1px solid #9a9a9a;box-sizing:border-box;border-radius:2px;"></div>
<svg class="a" style="left:1668px;top:557px;" width="8" height="8" viewBox="0 0 8 8"><path d="M0 .5H8M0 2.5H8M0 4.5H8M0 6.5H8" stroke="#777"/></svg>
<div class="a" style="left:0px;top:987px;width:1680px;height:2px;background:#fff;"></div>
<div class="a" style="left:0px;top:989px;width:1680px;height:21px;background:#f0eceb;"></div>
<svg class="a" style="left:1667.5px;top:998px;" width="12" height="12" viewBox="0 0 12 12"><rect x="9" y="1" width="2" height="2" fill="#b8b4b3"/><rect x="5" y="5" width="2" height="2" fill="#b8b4b3"/><rect x="9" y="5" width="2" height="2" fill="#b8b4b3"/><rect x="1" y="9" width="2" height="2" fill="#b8b4b3"/><rect x="5" y="9" width="2" height="2" fill="#b8b4b3"/><rect x="9" y="9" width="2" height="2" fill="#b8b4b3"/></svg>
<div class="a" style="left:0px;top:1010px;width:1680px;height:40px;background:linear-gradient(90deg,#8196b1 0,#8499b4 40px,#a7c1df 72px,#a7c1df 1262px,#8499b4 1300px,#8398b3 1680px);"></div>
<div class="a" style="left:0px;top:1009.5px;width:1680px;height:1.5px;background:#45536a;"></div>
<div class="a" style="left:0px;top:1011px;width:1680px;height:1px;background:rgba(255,255,255,.35);"></div>
<svg class="a" style="left:6px;top:1010px;" width="42" height="40" viewBox="0 0 42 40"><defs><radialGradient id="og" cx="50%" cy="35%" r="65%"><stop offset="0" stop-color="#6db4ea"/><stop offset=".55" stop-color="#2a6fc0"/><stop offset="1" stop-color="#123c7c"/></radialGradient></defs><circle cx="20.5" cy="20" r="18.5" fill="#1d3e6e"/><circle cx="20.5" cy="20" r="17.3" fill="url(#og)"/><path d="M11.5 12.5Q15.5 10.5 19.2 12.6L17.6 19.2Q14 17.2 10 19Z" fill="#f0562c"/><path d="M21 13.2Q24.8 15.4 29.4 13.6L27.8 20.2Q23.6 22 19.4 19.8Z" fill="#8dc63f"/><path d="M9.5 20.8Q13.4 18.8 17.2 21L15.6 27.6Q11.8 25.4 8 27.4Z" fill="#2ea3e8"/><path d="M19 21.6Q22.8 23.8 27.4 22L25.8 28.6Q21.4 30.4 17.4 28.2Z" fill="#fbc314"/></svg>
<svg class="a" style="left:72px;top:1014px;" width="34" height="34" viewBox="0 0 34 34"><path d="M1.500 5.500H9L11 7.500H14V24H1.500Z" fill="#f7e3a0" stroke="#c9a243" stroke-width="1"/><path d="M9.500 8.500H17L19 10.500H23V26H9.500Z" fill="#f7e3a0" stroke="#c9a243" stroke-width="1"/><path d="M16.500 11.500H25L27 13.500H32.500V30H1.500V14H16.500Z" fill="#fbeaad" stroke="#c9a243" stroke-width="1"/><rect x="4" y="3.800" width="3.500" height="2.200" fill="#22b14c"/><rect x="12.500" y="6.500" width="3.500" height="2.200" fill="#d13a2a"/><rect x="20.500" y="9.500" width="3.500" height="2.200" fill="#2f8fe8"/><path d="M5.500 32.500V23.500Q5.500 20.500 8.500 20.500H25.500Q28.500 20.500 28.500 23.500V32.500H23.500V25.500H10.500V32.500Z" fill="#a8ddf5" stroke="#4aa3d8" stroke-width="1"/></svg>
<svg class="a" style="left:134px;top:1013px;" width="34" height="34" viewBox="0 0 32 32"><rect x="15" y="6" width="14" height="20" fill="#fff" stroke="#1e7145" stroke-width="1.4"/><path d="M20 10H27" stroke="#1e7145" stroke-width="1.6"/><path d="M20 13.2H27" stroke="#1e7145" stroke-width="1.6"/><path d="M20 16.4H27" stroke="#1e7145" stroke-width="1.6"/><path d="M20 19.6H27" stroke="#1e7145" stroke-width="1.6"/><path d="M20 22.8H27" stroke="#1e7145" stroke-width="1.6"/><path d="M23.5 8V24" stroke="#fff" stroke-width="1"/><path d="M2 5.5L19 2V30L2 26.5Z" fill="#1e7145"/><text x="10.5" y="21.5" text-anchor="middle" font-family="Liberation Sans, sans-serif" font-weight="700" font-size="14" fill="#fff">X</text></svg>
<svg class="a" style="left:196px;top:1013px;" width="34" height="34" viewBox="0 0 32 32"><rect x="15" y="6" width="14" height="20" fill="#fff" stroke="#2b579a" stroke-width="1.4"/><path d="M20 10H27" stroke="#2b579a" stroke-width="1.3"/><path d="M20 13H27" stroke="#2b579a" stroke-width="1.3"/><path d="M20 16H27" stroke="#2b579a" stroke-width="1.3"/><path d="M20 19H27" stroke="#2b579a" stroke-width="1.3"/><path d="M20 22H27" stroke="#2b579a" stroke-width="1.3"/><path d="M2 5.5L19 2V30L2 26.5Z" fill="#2b579a"/><text x="10.5" y="21.5" text-anchor="middle" font-family="Liberation Sans, sans-serif" font-weight="700" font-size="14" fill="#fff">W</text></svg>
<div class="a" style="left:249px;top:1011px;width:55px;height:39px;background:linear-gradient(160deg,#e6eef8 0%,#cfdcee 45%,#bccde4 55%,#c9d8ec 100%);border:1px solid #4a576b;box-sizing:border-box;border-radius:3px 3px 0 0;border-bottom:none;box-shadow:inset 0 0 0 1px rgba(255,255,255,.7);"></div>
<div class="a" style="left:245px;top:1011px;width:54px;height:39px;background:linear-gradient(160deg,#e6eef8 0%,#cfdcee 45%,#bccde4 55%,#c9d8ec 100%);border:1px solid #4a576b;box-sizing:border-box;border-radius:3px 3px 0 0;border-bottom:none;box-shadow:inset 0 0 0 1px rgba(255,255,255,.7);"></div>
<svg class="a" style="left:255px;top:1014px;" width="34" height="34" viewBox="0 0 34 34"><defs><linearGradient id="ieg" x1="0" y1="0" x2="0" y2="1"><stop offset="0" stop-color="#7fd0f5"/><stop offset=".55" stop-color="#2fa5e6"/><stop offset="1" stop-color="#1b86d0"/></linearGradient></defs><text x="17.500" y="31" text-anchor="middle" font-family="Liberation Sans, sans-serif" font-weight="700" font-size="54" fill="url(#ieg)" transform="translate(18 0) scale(1.1 1) translate(-18 0)">e</text><path d="M4.500 31C-3 25 5 10 18 4C25 .800 31.500 2 30.500 8" fill="none" stroke="#f6b80d" stroke-width="2.800"/><path d="M4.500 31C7 33 11 32 14 30" fill="none" stroke="#f6b80d" stroke-width="2"/></svg>
<svg class="a" style="left:320px;top:1013px;" width="34" height="34" viewBox="0 0 32 32"><rect x="15" y="8" width="15" height="14" fill="#fff" stroke="#0f6fc6" stroke-width="1.4"/><path d="M15.5 9L22.5 15.5 29.5 9" fill="none" stroke="#0f6fc6" stroke-width="1.4"/><path d="M2 5.5L19 2V30L2 26.5Z" fill="#0f6fc6"/><text x="10.5" y="21.5" text-anchor="middle" font-family="Liberation Sans, sans-serif" font-weight="700" font-size="14" fill="#fff">O</text></svg>
<div class="a" style="left:369px;top:1011px;width:59px;height:39px;background:linear-gradient(160deg,#e6eef8 0%,#cfdcee 45%,#bccde4 55%,#c9d8ec 100%);border:1px solid #4a576b;box-sizing:border-box;border-radius:3px 3px 0 0;border-bottom:none;box-shadow:inset 0 0 0 1px rgba(255,255,255,.7);"></div>
<svg class="a" style="left:381.5px;top:1012.5px;" width="34.0" height="34.0" viewBox="0 0 34 34"><circle cx="11.500" cy="11" r="8.300" fill="#19b5ef"/><circle cx="20.500" cy="21.500" r="8.300" fill="#19b5ef"/><circle cx="16" cy="16" r="11.800" fill="#19b5ef"/><g transform="translate(16 16) scale(.82) translate(-16 -16)"><circle cx="11.500" cy="11" r="8.300" fill="#fff"/><circle cx="20.500" cy="21.500" r="8.300" fill="#fff"/><circle cx="16" cy="16" r="11.800" fill="#fff"/></g><text x="16" y="24" text-anchor="middle" font-family="Liberation Sans, sans-serif" font-weight="700" font-size="22" fill="#19b5ef">S</text><circle cx="27" cy="28" r="5.900" fill="#fff"/><circle cx="27" cy="28" r="5" fill="#e8112d"/></svg>
<div class="a" style="left:431px;top:1011px;width:59px;height:39px;background:linear-gradient(160deg,#e6eef8 0%,#cfdcee 45%,#bccde4 55%,#c9d8ec 100%);border:1px solid #4a576b;box-sizing:border-box;border-radius:3px 3px 0 0;border-bottom:none;box-shadow:inset 0 0 0 1px rgba(255,255,255,.7);"></div>
<svg class="a" style="left:443.7px;top:1013px;" width="34" height="34" viewBox="0 0 32 32"><rect x="15" y="6" width="14" height="20" fill="#fff" stroke="#1e7145" stroke-width="1.4"/><path d="M20 10H27" stroke="#1e7145" stroke-width="1.6"/><path d="M20 13.2H27" stroke="#1e7145" stroke-width="1.6"/><path d="M20 16.4H27" stroke="#1e7145" stroke-width="1.6"/><path d="M20 19.6H27" stroke="#1e7145" stroke-width="1.6"/><path d="M20 22.8H27" stroke="#1e7145" stroke-width="1.6"/><path d="M23.5 8V24" stroke="#fff" stroke-width="1"/><path d="M2 5.5L19 2V30L2 26.5Z" fill="#1e7145"/><text x="10.5" y="21.5" text-anchor="middle" font-family="Liberation Sans, sans-serif" font-weight="700" font-size="14" fill="#fff">X</text></svg>
<div class="a" style="left:493px;top:1011px;width:59px;height:39px;background:linear-gradient(160deg,#e6eef8 0%,#cfdcee 45%,#bccde4 55%,#c9d8ec 100%);border:1px solid #4a576b;box-sizing:border-box;border-radius:3px 3px 0 0;border-bottom:none;box-shadow:inset 0 0 0 1px rgba(255,255,255,.7);"></div>
<svg class="a" style="left:505.70000000000005px;top:1013px;" width="34" height="34" viewBox="0 0 32 32"><rect x="15" y="6" width="14" height="20" fill="#fff" stroke="#2b579a" stroke-width="1.4"/><path d="M20 10H27" stroke="#2b579a" stroke-width="1.3"/><path d="M20 13H27" stroke="#2b579a" stroke-width="1.3"/><path d="M20 16H27" stroke="#2b579a" stroke-width="1.3"/><path d="M20 19H27" stroke="#2b579a" stroke-width="1.3"/><path d="M20 22H27" stroke="#2b579a" stroke-width="1.3"/><path d="M2 5.5L19 2V30L2 26.5Z" fill="#2b579a"/><text x="10.5" y="21.5" text-anchor="middle" font-family="Liberation Sans, sans-serif" font-weight="700" font-size="14" fill="#fff">W</text></svg>
<svg class="a" style="left:1306.2px;top:1022.0px;" width="17.0" height="17.0" viewBox="0 0 34 34"><circle cx="11.500" cy="11" r="8.300" fill="#19b5ef"/><circle cx="20.500" cy="21.500" r="8.300" fill="#19b5ef"/><circle cx="16" cy="16" r="11.800" fill="#19b5ef"/><g transform="translate(16 16) scale(.82) translate(-16 -16)"><circle cx="11.500" cy="11" r="8.300" fill="#fff"/><circle cx="20.500" cy="21.500" r="8.300" fill="#fff"/><circle cx="16" cy="16" r="11.800" fill="#fff"/></g><text x="16" y="24" text-anchor="middle" font-family="Liberation Sans, sans-serif" font-weight="700" font-size="22" fill="#19b5ef">S</text><circle cx="27" cy="28" r="5.900" fill="#fff"/><circle cx="27" cy="28" r="5" fill="#e8112d"/></svg>
<svg class="a" style="left:1331px;top:1023px;" width="16" height="16" viewBox="0 0 16 16"><circle cx="8" cy="8" r="7.5" fill="#3f9a3a" stroke="#2a6d27" stroke-width="1"/><path d="M4 7.2A4.2 4.2 0 0 1 11.4 5.4L12.6 4.2V8.2H8.6L10 6.8A2.6 2.6 0 0 0 5.6 7.6ZM12 8.8A4.2 4.2 0 0 1 4.6 10.6L3.4 11.8V7.8H7.4L6 9.2A2.6 2.6 0 0 0 10.4 8.4Z" fill="#f4e04a"/></svg>
<svg class="a" style="left:1354.5px;top:1023px;" width="17" height="17" viewBox="0 0 17 17"><rect x="4.5" y="1" width="8" height="6" fill="#fff" stroke="#777"/><rect x="1" y="6" width="15" height="7" rx="1.5" fill="#e9ecf2" stroke="#333"/><rect x="3.5" y="11" width="10" height="5" fill="#fff" stroke="#333"/><rect x="4" y="8.5" width="9" height="2" fill="#8fb0e0"/></svg>
<svg class="a" style="left:1378.5px;top:1023px;" width="17" height="16" viewBox="0 0 17 16"><rect x="1" y="1" width="14.5" height="10" fill="#c8c8c8" stroke="#2a3a9a" stroke-width="1.4"/><path d="M2 14.5H7M10 14.5H15M1 12.5H16" stroke="#2a3a9a" stroke-width="1.4"/></svg>
<svg class="a" style="left:1403px;top:1023px;" width="17" height="17" viewBox="0 0 17 17"><path d="M2.5 1.5L4 4" stroke="#999"/><path d="M3 5.5L8 2.5 14.5 11 9.5 14.5Z" fill="#9a9a9a" stroke="#666" stroke-width=".8"/><path d="M10.5 12.5L14 10 16 13 12.5 15.5Z" fill="#2a35c9"/><path d="M11.8 13.4L14.2 11.7" stroke="#fff"/></svg>
<svg class="a" style="left:1427px;top:1023px;" width="17" height="16" viewBox="0 0 17 16"><rect x=".7" y="1" width="15.6" height="11" fill="#0c1f4a" stroke="#111" stroke-width="1"/><path d="M5 10V5.5H7V10M8.5 10V3.5H10V10M11 10V6.5H12.4V10" fill="none" stroke="#7fb2ff" stroke-width="1.2"/><circle cx="6" cy="4" r="1.3" fill="#cfe0ff"/><path d="M4 14.5H13M8.5 12V14.5" stroke="#111" stroke-width="1.4"/></svg>
<svg class="a" style="left:1450px;top:1022.5px;" width="16" height="17" viewBox="0 0 16 17"><path d="M4.2 8V4.8A3.8 3.8 0 0 1 11.8 4.8V8" fill="none" stroke="#8d8d8d" stroke-width="2"/><rect x="1.5" y="7.5" width="13" height="8.5" rx="1" fill="#f5c426" stroke="#b88a0c" stroke-width="1"/><rect x="7" y="10" width="2" height="3.4" fill="#3b2b00"/></svg>
<svg class="a" style="left:1473px;top:1022.5px;" width="18" height="17" viewBox="0 0 18 17"><rect x="5" y="0.5" width="4" height="3.5" fill="#ddd" stroke="#777" stroke-width=".8"/><path d="M3.5 4H10.5V10L8.5 12V15.5H5.5V12L3.5 10Z" fill="#777" stroke="#555" stroke-width=".8"/><circle cx="12.5" cy="11.5" r="4.6" fill="#2fa32f" stroke="#1c6d1c" stroke-width=".8"/><path d="M10.2 11.6L12 13.4 14.9 9.8" fill="none" stroke="#fff" stroke-width="1.5"/></svg>
<svg class="a" style="left:1498.5px;top:1022.5px;" width="17" height="17" viewBox="0 0 17 17"><rect x=".5" y=".5" width="16" height="16" fill="#79c143" stroke="#5aa02c"/><path d="M8.5 3C6.5 4.2 4.8 4.4 3.2 4.4 3.2 9 4.8 12.4 8.5 14.2 12.2 12.4 13.8 9 13.8 4.4 12.2 4.4 10.5 4.2 8.5 3Z" fill="#fff"/><path d="M8.5 3V14.2M3.3 8H13.7" stroke="#79c143" stroke-width="1.3"/></svg>
<svg class="a" style="left:1522px;top:1022.5px;filter:drop-shadow(0 0 .6px #1a2230) drop-shadow(0 0 .5px #1a2230);" width="18" height="17" viewBox="0 0 18 17"><path d="M2.5 3.5H7V14.5H2.5Z" fill="none" stroke="#fff" stroke-width="1.3"/><path d="M7.5 2.5H10M7.5 15.5H10" stroke="#fff" stroke-width="1.3"/><path d="M9 1V4.5M13 1V4.5" stroke="#fff" stroke-width="1.6"/><path d="M7.5 4.5H14.5V8Q14.5 10.5 11 10.5Q7.5 10.5 7.5 8Z" fill="#fff"/><path d="M11 10.5V16" stroke="#fff" stroke-width="1.8"/></svg>
<svg class="a" style="left:1546px;top:1022.5px;filter:drop-shadow(0 0 .6px #1a2230) drop-shadow(0 0 .5px #1a2230);" width="18" height="17" viewBox="0 0 18 17"><path d="M2 1V5M5 1V5" stroke="#fff" stroke-width="1.3"/><path d="M1 4.5H6V8H1Z" fill="#fff"/><path d="M3.5 8V13.5H6" fill="none" stroke="#fff" stroke-width="1.3"/><rect x="6.5" y="4.5" width="10" height="8" fill="#8ea0b8" stroke="#fff" stroke-width="1.3"/><path d="M8 15.5H15M11.5 13V15.5" stroke="#fff" stroke-width="1.3"/></svg>
<svg class="a" style="left:1569.5px;top:1022.5px;filter:drop-shadow(0 0 .6px #1a2230) drop-shadow(0 0 .5px #1a2230);" width="18" height="17" viewBox="0 0 18 17"><path d="M1.5 6H4.5L8.5 2V15L4.5 11H1.5Z" fill="#fff" stroke="#d8dde6" stroke-width=".6"/><path d="M10.8 5.8A4 4 0 0 1 10.8 11.2M12.8 3.8A7 7 0 0 1 12.8 13.2M14.8 2A10 10 0 0 1 14.8 15" fill="none" stroke="#fff" stroke-width="1.1"/></svg>
<span class="a t" style="left:1607.60px;top:1016.00px;line-height:16px;font:400 12px 'Liberation Sans', sans-serif;color:#fff;letter-spacing:-0.105px;">9:07 AM</span>
<span class="a t" style="left:1606.70px;top:1033.00px;line-height:16px;font:400 12px 'Liberation Sans', sans-serif;color:#fff;letter-spacing:-0.131px;">9/7/2016</span>
<div class="a" style="left:1666px;top:1011px;width:14px;height:39px;background:linear-gradient(135deg,#9fb2cb,#75889f 60%,#8da0b9);border:1px solid #5f7088;box-sizing:border-box;box-shadow:inset 0 0 0 1px rgba(255,255,255,.35);"></div>
<div class="a" style="left:1680px;top:0px;width:1680px;height:50px;background:#f5f5f5;"></div>
<div class="a" style="left:1680px;top:49px;width:1680px;height:1px;background:#c3c3c3;"></div>
<svg class="a" style="left:1689px;top:1.5px;" width="19" height="18" viewBox="0 0 19 18"><rect x="8" y="2.5" width="9.5" height="13" fill="#fff" stroke="#2b579a" stroke-width="1"/><path d="M11 6H16M11 8.5H16M11 11H16" stroke="#2b579a" stroke-width="1"/><path d="M.5 2.8L11 .6V17.4L.5 15.2Z" fill="#2b579a"/><text x="5.7" y="12.6" text-anchor="middle" font-family="Liberation Sans, sans-serif" font-weight="700" font-size="8" fill="#fff">W</text></svg>
<svg class="a" style="left:1720px;top:3.5px;" width="14" height="14" viewBox="0 0 14 14"><path d="M.8.8H11.2L13.2 2.8V13.2H.8Z" fill="#8c4aae"/><rect x="3" y=".8" width="7" height="4.6" fill="#f5f5f5"/><rect x="3.2" y="8.2" width="7.600" height="5" fill="#8c4aae"/><rect x="4.600" y="9.600" width="4.800" height="3.600" fill="#f5f5f5"/></svg>
<svg class="a" style="left:1748px;top:2.5px;" width="16" height="15" viewBox="0 0 16 15"><path d="M2.2 6.2H9.2A4.3 4.3 0 0 1 9.2 14.6H5.5" fill="none" stroke="#2b67b5" stroke-width="1.9"/><path d="M6.4 1.6L1.6 6.2 6.4 10.8" fill="none" stroke="#2b67b5" stroke-width="1.9"/></svg>
<svg class="a" style="left:1769.0px;top:10.0px;" width="5" height="3" viewBox="0 0 5 3"><path d="M0 0H5L2.5 3Z" fill="#666"/></svg>
<svg class="a" style="left:1787px;top:2.5px;" width="16" height="16" viewBox="0 0 16 16"><path d="M12.300 5.400A5.500 5.500 0 1 0 13.500 9.600" fill="none" stroke="#2b67b5" stroke-width="1.900"/><path d="M8.200 5.800H13.200V.800" fill="none" stroke="#2b67b5" stroke-width="1.900"/></svg>
<svg class="a" style="left:1816px;top:1.5px;" width="19" height="18" viewBox="0 0 19 18"><rect x="4.5" y="3.5" width="8" height="4" fill="#fff" stroke="#555"/><rect x="1.5" y="7" width="14" height="7" rx="1" fill="#555"/><rect x="4.5" y="11.5" width="8" height="5" fill="#fff" stroke="#555"/><circle cx="13.2" cy="4.6" r="4.3" fill="#4ca66b"/><path d="M11 4.6L12.7 6.3 15.5 3" fill="none" stroke="#fff" stroke-width="1.3"/></svg>
<svg class="a" style="left:1847px;top:1.5px;" width="16" height="18" viewBox="0 0 16 18"><path d="M1.5 1.5H8.5L11.5 4.5V16.5H1.5Z" fill="#fff" stroke="#555"/><circle cx="8.6" cy="9.8" r="3.6" fill="#fff" stroke="#555" stroke-width="1.3"/><path d="M11 12.6L14.6 16.6" stroke="#555" stroke-width="2"/></svg>
<svg class="a" style="left:1876px;top:2.5px;" width="13" height="16" viewBox="0 0 13 16"><path d="M1.5.5H8L11.5 4V15.5H1.5Z" fill="#fff" stroke="#555"/><path d="M8 .5V4H11.5" fill="none" stroke="#555"/></svg>
<span class="a t" style="left:1906.93px;top:2.00px;line-height:22px;font:400 17px 'Liberation Sans', sans-serif;color:#555;">¶</span>
<svg class="a" style="left:1933px;top:1.5px;" width="17" height="18" viewBox="0 0 17 18"><rect x="1" y="3" width="11" height="13" fill="#e8bd6d"/><rect x="4" y="1.5" width="5" height="3" fill="#555"/><rect x="7.5" y="7.5" width="8" height="10" fill="#fff" stroke="#555"/><path d="M12.5 7.5V10.5H15.5" fill="none" stroke="#555" stroke-width=".8"/></svg>
<span class="a t" style="left:1962.45px;top:0.00px;line-height:8px;font:700 6.5px 'Liberation Sans', sans-serif;color:#444;">ABC</span>
<svg class="a" style="left:1962px;top:7.5px;" width="15" height="11" viewBox="0 0 15 11"><path d="M1.5 4.5L5.5 8.5 13.5 1" fill="none" stroke="#2b67b5" stroke-width="2.3"/></svg>
<svg class="a" style="left:1989px;top:7.5px;" width="9" height="9" viewBox="0 0 9 9"><path d="M1 1.5H8" stroke="#444" stroke-width="1.3"/><path d="M1 4.5H8L4.5 8Z" fill="#444"/></svg>
<span class="a t" style="left:2468.40px;top:6.00px;line-height:16px;font:400 12px 'Liberation Sans', sans-serif;color:#444;letter-spacing:0.074px;">Document1 - Word</span>
<span class="a t" style="left:3223.72px;top:3.00px;line-height:18px;font:700 14px 'Liberation Sans', sans-serif;color:#555;">?</span>
<svg class="a" style="left:3250px;top:5.5px;" width="15" height="12" viewBox="0 0 15 12"><rect x=".5" y=".5" width="13" height="10" fill="none" stroke="#444"/><path d="M.5 3H13.5" stroke="#444"/><path d="M7 9.5V5M4.8 6.8L7 4.6 9.2 6.8" fill="none" stroke="#444" stroke-width="1.1"/></svg>
<div class="a" style="left:3281px;top:12px;width:10px;height:2px;background:#444;"></div>
<svg class="a" style="left:3309px;top:5px;" width="13" height="13" viewBox="0 0 13 13"><rect x="3" y="1" width="8.5" height="7.5" fill="none" stroke="#444" stroke-width="1.3"/><path d="M3 2H11.5" stroke="#444" stroke-width="2"/><rect x="1" y="4" width="8.5" height="7.5" fill="#f5f5f5" stroke="#444" stroke-width="1.3"/><path d="M1 5H9.5" stroke="#444" stroke-width="2"/></svg>
<svg class="a" style="left:3339px;top:5px;" width="12" height="12" viewBox="0 0 12 12"><path d="M1.5 1.5L10.5 10.5M10.5 1.5L1.5 10.5" stroke="#333" stroke-width="2.2"/></svg>
<span class="a t" style="left:3102.00px;top:30.00px;line-height:16px;font:400 12px 'Liberation Sans', sans-serif;color:#444;letter-spacing:-0.284px;">Hausman, Leslie B. (CDC/OID/NCEZID)</span>
<svg class="a" style="left:3314.0px;top:35.5px;" width="5" height="3" viewBox="0 0 5 3"><path d="M0 0H5L2.5 3Z" fill="#666"/></svg>
<div class="a" style="left:3326px;top:25px;width:24px;height:24px;background:#ababab;"></div>
<svg class="a" style="left:3326px;top:25px;" width="24" height="24" viewBox="0 0 24 24"><circle cx="12" cy="8.500" r="4.900" fill="#f5f5f5"/><path d="M3 24V18Q3 14.500 7 14.300H17Q21 14.500 21 18V24Z" fill="#f5f5f5"/></svg>
<div class="a" style="left:1680px;top:25px;width:59px;height:25px;background:#19478a;"></div>
<span class="a t" style="left:1699.00px;top:31.00px;line-height:16px;font:400 12px 'Liberation Sans', sans-serif;color:#fff;letter-spacing:-1.315px;">FILE</span>
<div class="a" style="left:1743px;top:25px;width:62px;height:25px;background:#fafafa;border:1px solid #c3c3c3;box-sizing:border-box;border-bottom:none;"></div>
<span class="a t" style="left:1756.30px;top:31.00px;line-height:16px;font:400 12px 'Liberation Sans', sans-serif;color:#2b579a;letter-spacing:-0.367px;">HOME</span>
<span class="a t" style="left:1819.50px;top:31.00px;line-height:16px;font:400 12px 'Liberation Sans', sans-serif;color:#444;letter-spacing:-1.119px;">INSERT</span>
<span class="a t" style="left:1887.40px;top:31.00px;line-height:16px;font:400 12px 'Liberation Sans', sans-serif;color:#444;letter-spacing:-1.323px;">DESIGN</span>
<span class="a t" style="left:1956.20px;top:31.00px;line-height:16px;font:400 12px 'Liberation Sans', sans-serif;color:#444;letter-spacing:-0.662px;">PAGE LAYOUT</span>
<span class="a t" style="left:2062.00px;top:31.00px;line-height:16px;font:400 12px 'Liberation Sans', sans-serif;color:#444;letter-spacing:-1.668px;">REFERENCES</span>
<span class="a t" style="left:2158.30px;top:31.00px;line-height:16px;font:400 12px 'Liberation Sans', sans-serif;color:#444;letter-spacing:-0.523px;">MAILINGS</span>
<span class="a t" style="left:2241.00px;top:31.00px;line-height:16px;font:400 12px 'Liberation Sans', sans-serif;color:#444;letter-spacing:-1.469px;">REVIEW</span>
<span class="a t" style="left:2310.00px;top:31.00px;line-height:16px;font:400 12px 'Liberation Sans', sans-serif;color:#444;letter-spacing:-1.224px;">VIEW</span>
<span class="a t" style="left:2366.00px;top:31.00px;line-height:16px;font:400 12px 'Liberation Sans', sans-serif;color:#444;letter-spacing:-0.380px;">EndNote X7</span>
<div class="a" style="left:1680px;top:50px;width:1680px;height:92px;background:#fafafa;"></div>
<div class="a" style="left:1680px;top:142px;width:1680px;height:1px;background:#cfcfcf;"></div>
<div class="a" style="left:1680px;top:143px;width:1680px;height:5px;background:#f5f5f5;"></div>
<svg class="a" style="left:1691px;top:57px;" width="32" height="33" viewBox="0 0 32 33"><rect x="1.5" y="4.5" width="22" height="25" rx="1.5" fill="#e8bd6d"/><rect x="7" y="2.5" width="11" height="5" rx="1" fill="#555"/><rect x="10.5" y="0.8" width="4" height="3" fill="#555"/><path d="M15.5 14.5H25L29.5 19V31.5H15.5Z" fill="#fff" stroke="#666"/><path d="M25 14.5V19H29.5" fill="none" stroke="#666"/></svg>
<span class="a t" style="left:1691.00px;top:92.00px;line-height:16px;font:400 12px 'Liberation Sans', sans-serif;color:#444;letter-spacing:-0.672px;">Paste</span>
<svg class="a" style="left:1702.0px;top:113.0px;" width="5" height="3" viewBox="0 0 5 3"><path d="M0 0H5L2.5 3Z" fill="#666"/></svg>
<svg class="a" style="left:1729px;top:56px;" width="16" height="16" viewBox="0 0 16 16"><path d="M4.5 1L10.5 11M11.5 1L5.5 11" stroke="#b5b5b5" stroke-width="1.4"/><circle cx="4" cy="12.6" r="2.3" fill="none" stroke="#b5b5b5" stroke-width="1.3"/><circle cx="12" cy="12.6" r="2.3" fill="none" stroke="#b5b5b5" stroke-width="1.3"/></svg>
<span class="a t" style="left:1748.00px;top:58.00px;line-height:16px;font:400 12px 'Liberation Sans', sans-serif;color:#a6a6a6;letter-spacing:0.156px;">Cut</span>
<svg class="a" style="left:1729px;top:80px;" width="16" height="16" viewBox="0 0 16 16"><path d="M1.5 1.5H7L9.5 4V11.5H1.5Z" fill="#fafafa" stroke="#b5b5b5"/><path d="M6.5 5.5H12L14.5 8V15.5H6.5Z" fill="#fafafa" stroke="#b5b5b5"/><path d="M8.5 9.5H12.5M8.5 11.5H12.5M8.5 13.5H12.5" stroke="#c5c5c5"/></svg>
<span class="a t" style="left:1748.00px;top:81.00px;line-height:16px;font:400 12px 'Liberation Sans', sans-serif;color:#a6a6a6;letter-spacing:-0.005px;">Copy</span>
<svg class="a" style="left:1729px;top:102px;" width="17" height="16" viewBox="0 0 17 16"><path d="M9 6L13.5 1.5L15.5 3.5L11 8Z" fill="#555"/><path d="M7.5 5L12 9.5 10.5 11 6 6.5Z" fill="#666"/><path d="M6 6.5L10.5 11 6.5 15 .8 11.2Z" fill="#e8bd6d"/></svg>
<span class="a t" style="left:1748.00px;top:104.00px;line-height:16px;font:400 12px 'Liberation Sans', sans-serif;color:#444;letter-spacing:-0.105px;">Format Painter</span>
<span class="a t" style="left:1725.00px;top:127.00px;line-height:16px;font:400 12px 'Liberation Sans', sans-serif;color:#444;letter-spacing:-0.047px;">Clipboard</span>
<svg class="a" style="left:1825.5px;top:131.0px;" width="8" height="8" viewBox="0 0 8 8"><path d="M.5 4.500V.500H4.500" fill="none" stroke="#777"/><path d="M2.500 2.500L6.300 6.300M6.500 3.200V6.500H3.200" fill="none" stroke="#777" stroke-width="1"/></svg>
<div class="a" style="left:1837px;top:54px;width:1px;height:84px;background:#d4d4d4;"></div>
<div class="a" style="left:1842px;top:61px;width:94px;height:23px;background:#fff;border:1px solid #ababab;box-sizing:border-box;"></div>
<div class="a" style="left:1935px;top:61px;width:44px;height:23px;background:#fff;border:1px solid #ababab;box-sizing:border-box;"></div>
<span class="a t" style="left:1845.50px;top:66.00px;line-height:16px;font:400 12px 'Liberation Sans', sans-serif;color:#222;letter-spacing:-0.091px;">Calibri (Body)</span>
<svg class="a" style="left:1925.5px;top:71.0px;" width="5" height="3" viewBox="0 0 5 3"><path d="M0 0H5L2.5 3Z" fill="#666"/></svg>
<span class="a t" style="left:1938.50px;top:66.00px;line-height:16px;font:400 12px 'Liberation Sans', sans-serif;color:#222;letter-spacing:-0.969px;">11</span>
<svg class="a" style="left:1968.5px;top:71.0px;" width="5" height="3" viewBox="0 0 5 3"><path d="M0 0H5L2.5 3Z" fill="#666"/></svg>
<span class="a t" style="left:1985.33px;top:65.00px;line-height:18px;font:400 14px 'Liberation Sans', sans-serif;color:#555;">A</span>
<svg class="a" style="left:1994px;top:63px;" width="6" height="4" viewBox="0 0 6 4"><path d="M0 4L3 0 6 4Z" fill="#2b67b5"/></svg>
<span class="a t" style="left:2007.76px;top:68.00px;line-height:14px;font:400 11.5px 'Liberation Sans', sans-serif;color:#555;">A</span>
<svg class="a" style="left:2015px;top:64px;" width="6" height="4" viewBox="0 0 6 4"><path d="M0 0H6L3 4Z" fill="#2b67b5"/></svg>
<div class="a" style="left:2027px;top:61px;width:1px;height:23px;background:#d4d4d4;"></div>
<span class="a t" style="left:2034.65px;top:65.00px;line-height:16px;font:400 13px 'Liberation Sans', sans-serif;color:#555;">Aa</span>
<svg class="a" style="left:2055.1px;top:71.0px;" width="5" height="3" viewBox="0 0 5 3"><path d="M0 0H5L2.5 3Z" fill="#666"/></svg>
<div class="a" style="left:2069px;top:61px;width:1px;height:23px;background:#d4d4d4;"></div>
<span class="a t" style="left:2077.83px;top:63.00px;line-height:14px;font:400 11px 'Liberation Sans', sans-serif;color:#666;">A</span>
<svg class="a" style="left:2078px;top:63px;" width="17" height="16" viewBox="0 0 17 16"><g transform="rotate(-42 9 9)"><rect x="2" y="6" width="13.500" height="6.500" rx="1.200" fill="#e88a9a"/><rect x="5" y="6" width="1.300" height="6.500" fill="#fafafa"/></g></svg>
<span class="a t" style="left:1847.30px;top:96.00px;line-height:16px;font:700 13px 'Liberation Sans', sans-serif;color:#444;">B</span>
<span class="a t" style="left:1871.77px;top:96.00px;line-height:18px;font:italic 700 13.5px 'Liberation Serif', serif;color:#444;">I</span>
<span class="a t" style="left:1891.78px;top:96.00px;line-height:16px;font:700 12.5px 'Liberation Sans', sans-serif;color:#444;text-decoration:underline;">U</span>
<svg class="a" style="left:1911.1px;top:102.0px;" width="5" height="3" viewBox="0 0 5 3"><path d="M0 0H5L2.5 3Z" fill="#666"/></svg>
<span class="a t" style="left:1922.12px;top:97.00px;line-height:14px;font:400 11px 'Liberation Sans', sans-serif;color:#444;text-decoration:line-through;">abc</span>
<span class="a t" style="left:1947.38px;top:96.00px;line-height:16px;font:700 13px 'Liberation Sans', sans-serif;color:#444;">x</span>
<span class="a t" style="left:1956.19px;top:104.00px;line-height:8px;font:700 6.5px 'Liberation Sans', sans-serif;color:#2b67b5;">2</span>
<span class="a t" style="left:1969.38px;top:96.00px;line-height:16px;font:700 13px 'Liberation Sans', sans-serif;color:#444;">x</span>
<span class="a t" style="left:1978.19px;top:95.00px;line-height:8px;font:700 6.5px 'Liberation Sans', sans-serif;color:#2b67b5;">2</span>
<div class="a" style="left:1990px;top:93px;width:1px;height:22px;background:#d4d4d4;"></div>
<svg class="a" style="left:1996px;top:93px;" width="20" height="21" viewBox="0 0 20 21"><text x="9.800" y="16.200" text-anchor="middle" font-family="Liberation Sans, sans-serif" font-weight="700" font-size="15.500" fill="#fff" stroke="#b9d2f0" stroke-width="3.200" paint-order="stroke" stroke-linejoin="round">A</text><text x="9.800" y="16.200" text-anchor="middle" font-family="Liberation Sans, sans-serif" font-weight="700" font-size="15.500" fill="#fff" stroke="#3b78c4" stroke-width="1.700" paint-order="stroke" stroke-linejoin="round">A</text></svg>
<svg class="a" style="left:2018.1px;top:102.0px;" width="5" height="3" viewBox="0 0 5 3"><path d="M0 0H5L2.5 3Z" fill="#666"/></svg>
<span class="a t" style="left:2030.44px;top:95.00px;line-height:12px;font:400 10px 'Liberation Sans', sans-serif;color:#444;">ab</span>
<svg class="a" style="left:2035px;top:94px;" width="14" height="13" viewBox="0 0 14 13"><path d="M11.5 1L13.2 2.6 5.5 11 3 11.6 3.6 9.2Z" fill="#666"/></svg>
<div class="a" style="left:2031px;top:107px;width:16px;height:4px;background:#ffff00;"></div>
<svg class="a" style="left:2053.1px;top:102.0px;" width="5" height="3" viewBox="0 0 5 3"><path d="M0 0H5L2.5 3Z" fill="#666"/></svg>
<span class="a t" style="left:2068.33px;top:93.00px;line-height:18px;font:400 14px 'Liberation Sans', sans-serif;color:#444;">A</span>
<div class="a" style="left:2065px;top:107px;width:16px;height:4px;background:#ff0000;"></div>
<svg class="a" style="left:2087.1px;top:102.0px;" width="5" height="3" viewBox="0 0 5 3"><path d="M0 0H5L2.5 3Z" fill="#666"/></svg>
<span class="a t" style="left:1949.40px;top:127.00px;line-height:16px;font:400 12px 'Liberation Sans', sans-serif;color:#444;letter-spacing:-0.272px;">Font</span>
<svg class="a" style="left:2089.0px;top:131.0px;" width="8" height="8" viewBox="0 0 8 8"><path d="M.5 4.500V.500H4.500" fill="none" stroke="#777"/><path d="M2.500 2.500L6.300 6.300M6.500 3.200V6.500H3.200" fill="none" stroke="#777" stroke-width="1"/></svg>
<div class="a" style="left:2100px;top:54px;width:1px;height:84px;background:#d4d4d4;"></div>
<svg class="a" style="left:2108px;top:63.7px;" width="14" height="16" viewBox="0 0 14 16"><circle cx="2" cy="2" r="1.5" fill="#2b67b5"/><path d="M6 2H13.5" stroke="#666" stroke-width="1.1"/><circle cx="2" cy="8" r="1.5" fill="#2b67b5"/><path d="M6 8H13.5" stroke="#666" stroke-width="1.1"/><circle cx="2" cy="14" r="1.5" fill="#2b67b5"/><path d="M6 14H13.5" stroke="#666" stroke-width="1.1"/></svg>
<svg class="a" style="left:2129.5px;top:70.7px;" width="5" height="3" viewBox="0 0 5 3"><path d="M0 0H5L2.5 3Z" fill="#666"/></svg>
<svg class="a" style="left:2143px;top:63.7px;" width="14" height="16" viewBox="0 0 14 16"><text x="0" y="4.2" font-family="Liberation Sans, sans-serif" font-size="5.5" font-weight="700" fill="#2b67b5">1</text><path d="M6 2H13.5" stroke="#666" stroke-width="1.1"/><text x="0" y="10.2" font-family="Liberation Sans, sans-serif" font-size="5.5" font-weight="700" fill="#2b67b5">2</text><path d="M6 8H13.5" stroke="#666" stroke-width="1.1"/><text x="0" y="16.2" font-family="Liberation Sans, sans-serif" font-size="5.5" font-weight="700" fill="#2b67b5">3</text><path d="M6 14H13.5" stroke="#666" stroke-width="1.1"/></svg>
<svg class="a" style="left:2163.5px;top:70.7px;" width="5" height="3" viewBox="0 0 5 3"><path d="M0 0H5L2.5 3Z" fill="#666"/></svg>
<svg class="a" style="left:2176px;top:63.7px;" width="15" height="16" viewBox="0 0 15 16"><text x="0" y="4.5" font-family="Liberation Sans, sans-serif" font-size="5" font-weight="700" fill="#2b67b5">1</text><path d="M4.5 2H13" stroke="#666" stroke-width="1.1"/><text x="3.5" y="10.4" font-family="Liberation Sans, sans-serif" font-size="5" font-weight="700" fill="#2b67b5">a</text><path d="M8 8H13" stroke="#666" stroke-width="1.1"/><text x="7.5" y="16" font-family="Liberation Sans, sans-serif" font-size="5" font-weight="700" fill="#2b67b5">i</text><path d="M10.5 14H13" stroke="#666" stroke-width="1.1"/></svg>
<svg class="a" style="left:2195.5px;top:70.7px;" width="5" height="3" viewBox="0 0 5 3"><path d="M0 0H5L2.5 3Z" fill="#666"/></svg>
<div class="a" style="left:2210px;top:61px;width:1px;height:23px;background:#d4d4d4;"></div>
<svg class="a" style="left:2218px;top:65.7px;" width="16" height="12" viewBox="0 0 16 12"><path d="M7 1H16M9 4.3H16M9 7.6H16M7 11H16" stroke="#666" stroke-width="1.1"/><path d="M7 6H1M3.6 3.4L1 6 3.6 8.6" fill="none" stroke="#2b67b5" stroke-width="1.5"/></svg>
<svg class="a" style="left:2240px;top:65.7px;" width="16" height="12" viewBox="0 0 16 12"><path d="M7 1H16M9 4.3H16M9 7.6H16M7 11H16" stroke="#666" stroke-width="1.1"/><path d="M0 6H6M3.4 3.4L6 6 3.4 8.6" fill="none" stroke="#2b67b5" stroke-width="1.5"/></svg>
<div class="a" style="left:2263px;top:61px;width:1px;height:23px;background:#d4d4d4;"></div>
<span class="a t" style="left:2272.25px;top:63.00px;line-height:12px;font:700 9px 'Liberation Sans', sans-serif;color:#2b67b5;">A</span>
<span class="a t" style="left:2272.75px;top:72.00px;line-height:12px;font:700 9px 'Liberation Sans', sans-serif;color:#8a4aa8;">Z</span>
<svg class="a" style="left:2280px;top:64px;" width="8" height="16" viewBox="0 0 8 16"><path d="M4 0V13M1 10L4 14 7 10" fill="none" stroke="#555" stroke-width="1.3"/></svg>
<div class="a" style="left:2294px;top:61px;width:1px;height:23px;background:#d4d4d4;"></div>
<span class="a t" style="left:2305.13px;top:63.00px;line-height:22px;font:400 17px 'Liberation Sans', sans-serif;color:#555;">¶</span>
<div class="a" style="left:2105px;top:92px;width:22px;height:23px;background:#c2d5f2;"></div>
<svg class="a" style="left:2109px;top:97.5px;" width="14" height="12" viewBox="0 0 14 12"><path d="M0 1.0H14" stroke="#666" stroke-width="1.2"/><path d="M0 4.2H9" stroke="#666" stroke-width="1.2"/><path d="M0 7.4H14" stroke="#666" stroke-width="1.2"/><path d="M0 10.600000000000001H9" stroke="#666" stroke-width="1.2"/></svg>
<svg class="a" style="left:2130.8px;top:97.5px;" width="14" height="12" viewBox="0 0 14 12"><path d="M0 1.0H14" stroke="#666" stroke-width="1.2"/><path d="M2.5 4.2H11.5" stroke="#666" stroke-width="1.2"/><path d="M0 7.4H14" stroke="#666" stroke-width="1.2"/><path d="M2.5 10.600000000000001H11.5" stroke="#666" stroke-width="1.2"/></svg>
<svg class="a" style="left:2153px;top:97.5px;" width="14" height="12" viewBox="0 0 14 12"><path d="M0 1.0H14" stroke="#666" stroke-width="1.2"/><path d="M5 4.2H14" stroke="#666" stroke-width="1.2"/><path d="M0 7.4H14" stroke="#666" stroke-width="1.2"/><path d="M5 10.600000000000001H14" stroke="#666" stroke-width="1.2"/></svg>
<svg class="a" style="left:2174.8px;top:97.5px;" width="14" height="12" viewBox="0 0 14 12"><path d="M0 1.0H14" stroke="#666" stroke-width="1.2"/><path d="M0 4.2H14" stroke="#666" stroke-width="1.2"/><path d="M0 7.4H14" stroke="#666" stroke-width="1.2"/><path d="M0 10.600000000000001H14" stroke="#666" stroke-width="1.2"/></svg>
<div class="a" style="left:2197px;top:93px;width:1px;height:22px;background:#d4d4d4;"></div>
<svg class="a" style="left:2205px;top:95.5px;" width="16" height="16" viewBox="0 0 16 16"><path d="M3 1V15M.6 3.6L3 1 5.400 3.6M.6 12.400L3 15 5.400 12.400" fill="none" stroke="#2b67b5" stroke-width="1.2"/><path d="M8 3H15.500M8 6.3H15.500M8 9.600H15.500M8 13H15.500" stroke="#666" stroke-width="1.1"/></svg>
<svg class="a" style="left:2224.5px;top:102.0px;" width="5" height="3" viewBox="0 0 5 3"><path d="M0 0H5L2.5 3Z" fill="#666"/></svg>
<div class="a" style="left:2239px;top:93px;width:1px;height:22px;background:#d4d4d4;"></div>
<svg class="a" style="left:2246px;top:94.5px;" width="18" height="18" viewBox="0 0 18 18"><path d="M3 9L9 3 14 8 8 14Z" fill="#fff" stroke="#555" stroke-width="1.1"/><path d="M7.500 1V5" stroke="#555"/><path d="M14.500 8.500Q16.500 11.500 15 13Q13.500 11.500 14.500 8.500Z" fill="#2b67b5"/><rect x="1.500" y="14.500" width="15" height="3" fill="#fff" stroke="#888"/></svg>
<svg class="a" style="left:2268.5px;top:102.0px;" width="5" height="3" viewBox="0 0 5 3"><path d="M0 0H5L2.5 3Z" fill="#666"/></svg>
<svg class="a" style="left:2281px;top:96.0px;" width="15" height="15" viewBox="0 0 15 15"><rect x=".500" y=".500" width="13.500" height="13.500" fill="none" stroke="#666" stroke-dasharray="1 1.500"/><path d="M7.300 1V14M1 7.300H14" stroke="#666" stroke-dasharray="1 1.500"/><path d="M.500 14H14" stroke="#444" stroke-width="1.300"/></svg>
<svg class="a" style="left:2302.5px;top:102.0px;" width="5" height="3" viewBox="0 0 5 3"><path d="M0 0H5L2.5 3Z" fill="#666"/></svg>
<span class="a t" style="left:2178.50px;top:127.00px;line-height:16px;font:400 12px 'Liberation Sans', sans-serif;color:#444;letter-spacing:-0.518px;">Paragraph</span>
<svg class="a" style="left:2313.9px;top:131.0px;" width="8" height="8" viewBox="0 0 8 8"><path d="M.5 4.500V.500H4.500" fill="none" stroke="#777"/><path d="M2.500 2.500L6.300 6.300M6.500 3.200V6.500H3.200" fill="none" stroke="#777" stroke-width="1"/></svg>
<div class="a" style="left:2325px;top:54px;width:1px;height:84px;background:#d4d4d4;"></div>
<div class="a" style="left:2331px;top:56px;width:880px;height:60px;background:#fff;border:1px solid #b5b5b5;box-sizing:border-box;"></div>
<div class="a" style="left:2332px;top:58px;width:72px;height:56px;background:#fff;border:3px solid #c2d5f2;box-sizing:border-box;"></div>
<div class="a" style="left:2338.6px;top:66px;width:58.40000000000009px;height:24px;overflow:hidden;"><span class="a t" style="left:0;top:5px;line-height:18px;font:400 12.7px 'Liberation Sans', sans-serif;color:#111;letter-spacing:-0.15px">AaBbCcDc</span></div>
<div class="a" style="left:2410.6px;top:66px;width:58.40000000000009px;height:24px;overflow:hidden;"><span class="a t" style="left:0;top:5px;line-height:18px;font:400 12.7px 'Liberation Sans', sans-serif;color:#111;letter-spacing:-0.15px">AaBbCcDc</span></div>
<span class="a t" style="left:2482.70px;top:68.00px;line-height:26px;font:400 20.5px 'Liberation Serif', serif;color:#2e6cb3;letter-spacing:-0.700px;">AaBbC</span>
<span class="a t" style="left:2554.80px;top:70.00px;line-height:20px;font:400 16px 'Liberation Serif', serif;color:#4a86c8;letter-spacing:-0.340px;">AaBbCcI</span>
<div class="a" style="left:2624px;top:65px;width:64px;height:30px;overflow:hidden;"><span class="t" style="position:absolute;left:2.8px;top:-12.5px;line-height:40px;font:400 35.5px 'Liberation Serif',serif;color:#000;letter-spacing:-2.2px">AaB</span></div>
<span class="a t" style="left:2698.90px;top:72.00px;line-height:16px;font:400 12.5px 'Liberation Sans', sans-serif;color:#5f6f85;letter-spacing:0.585px;">AaBbCcD</span>
<div class="a" style="left:2771px;top:66px;width:58.30000000000018px;height:24px;overflow:hidden;"><span class="a t" style="left:0;top:5px;line-height:18px;font:italic 400 12.7px 'Liberation Sans', sans-serif;color:#404040;letter-spacing:-0.15px">AaBbCcDc</span></div>
<div class="a" style="left:2843px;top:66px;width:58px;height:24px;overflow:hidden;"><span class="a t" style="left:0;top:5px;line-height:18px;font:italic 400 12.7px 'Liberation Sans', sans-serif;color:#000;letter-spacing:-0.15px">AaBbCcDc</span></div>
<div class="a" style="left:2915px;top:66px;width:58px;height:24px;overflow:hidden;"><span class="a t" style="left:0;top:5px;line-height:18px;font:italic 400 12.7px 'Liberation Sans', sans-serif;color:#5b9bd5;letter-spacing:-0.15px">AaBbCcDc</span></div>
<div class="a" style="left:2987px;top:66px;width:58px;height:24px;overflow:hidden;"><span class="a t" style="left:0;top:5px;line-height:18px;font:700 12.7px 'Liberation Sans', sans-serif;color:#000;letter-spacing:-0.75px">AaBbCcDc</span></div>
<div class="a" style="left:3059px;top:66px;width:58.30000000000018px;height:24px;overflow:hidden;"><span class="a t" style="left:0;top:5px;line-height:18px;font:italic 400 12.7px 'Liberation Sans', sans-serif;color:#404040;letter-spacing:-0.15px">AaBbCcDc</span></div>
<div class="a" style="left:3130.7px;top:66px;width:58.30000000000018px;height:24px;overflow:hidden;"><span class="a t" style="left:0;top:5px;line-height:18px;font:italic 400 12.7px 'Liberation Sans', sans-serif;color:#5b9bd5;letter-spacing:-0.15px">AaBbCcDc</span></div>
<div class="a" style="left:3130.5px;top:68px;width:58.5px;height:1px;background:#5b9bd5;"></div>
<div class="a" style="left:3130.5px;top:87.5px;width:58.5px;height:1px;background:#5b9bd5;"></div>
<span class="a t" style="left:2343.40px;top:96.00px;line-height:16px;font:400 12px 'Liberation Sans', sans-serif;color:#555;letter-spacing:-0.022px;">¶ Normal</span>
<span class="a t" style="left:2409.20px;top:96.00px;line-height:16px;font:400 12px 'Liberation Sans', sans-serif;color:#555;letter-spacing:-0.428px;">¶ No Spac...</span>
<span class="a t" style="left:2485.50px;top:96.00px;line-height:16px;font:400 12px 'Liberation Sans', sans-serif;color:#555;letter-spacing:-0.277px;">Heading 1</span>
<span class="a t" style="left:2557.30px;top:96.00px;line-height:16px;font:400 12px 'Liberation Sans', sans-serif;color:#555;letter-spacing:-0.165px;">Heading 2</span>
<span class="a t" style="left:2644.20px;top:96.00px;line-height:16px;font:400 12px 'Liberation Sans', sans-serif;color:#555;letter-spacing:0.191px;">Title</span>
<span class="a t" style="left:2708.00px;top:96.00px;line-height:16px;font:400 12px 'Liberation Sans', sans-serif;color:#555;letter-spacing:0.024px;">Subtitle</span>
<span class="a t" style="left:2769.00px;top:96.00px;line-height:16px;font:400 12px 'Liberation Sans', sans-serif;color:#555;letter-spacing:-0.370px;">Subtle Em...</span>
<span class="a t" style="left:2847.30px;top:96.00px;line-height:16px;font:400 12px 'Liberation Sans', sans-serif;color:#555;letter-spacing:-0.427px;">Emphasis</span>
<span class="a t" style="left:2915.50px;top:96.00px;line-height:16px;font:400 12px 'Liberation Sans', sans-serif;color:#555;letter-spacing:-0.418px;">Intense E...</span>
<span class="a t" style="left:2998.00px;top:96.00px;line-height:16px;font:400 12px 'Liberation Sans', sans-serif;color:#555;letter-spacing:-0.172px;">Strong</span>
<span class="a t" style="left:3071.00px;top:96.00px;line-height:16px;font:400 12px 'Liberation Sans', sans-serif;color:#555;letter-spacing:-0.026px;">Quote</span>
<span class="a t" style="left:3129.70px;top:96.00px;line-height:16px;font:400 12px 'Liberation Sans', sans-serif;color:#555;letter-spacing:-0.304px;">Intense Q...</span>
<div class="a" style="left:3197px;top:56px;width:14px;height:21px;background:#fff;border:1px solid #b5b5b5;box-sizing:border-box;"></div>
<div class="a" style="left:3197px;top:76px;width:14px;height:21px;background:#fff;border:1px solid #b5b5b5;box-sizing:border-box;"></div>
<div class="a" style="left:3197px;top:96px;width:14px;height:20px;background:#fff;border:1px solid #b5b5b5;box-sizing:border-box;"></div>
<svg class="a" style="left:3200.5px;top:64px;" width="7" height="4" viewBox="0 0 7 4"><path d="M0 4L3.500 0 7 4Z" fill="#bbb"/></svg>
<svg class="a" style="left:3200.5px;top:85px;" width="7" height="4" viewBox="0 0 7 4"><path d="M0 0H7L3.500 4Z" fill="#666"/></svg>
<svg class="a" style="left:3200.5px;top:102px;" width="7" height="8" viewBox="0 0 7 8"><path d="M0 1H7" stroke="#666"/><path d="M0 3.500H7L3.500 7.500Z" fill="#666"/></svg>
<span class="a t" style="left:2750.40px;top:127.00px;line-height:16px;font:400 12px 'Liberation Sans', sans-serif;color:#444;letter-spacing:-0.898px;">Styles</span>
<svg class="a" style="left:3207.1px;top:131.0px;" width="8" height="8" viewBox="0 0 8 8"><path d="M.5 4.500V.500H4.500" fill="none" stroke="#777"/><path d="M2.500 2.500L6.300 6.300M6.500 3.200V6.500H3.200" fill="none" stroke="#777" stroke-width="1"/></svg>
<div class="a" style="left:3219px;top:54px;width:1px;height:84px;background:#d4d4d4;"></div>
<svg class="a" style="left:3226px;top:57px;" width="16" height="15" viewBox="0 0 16 15"><rect x="1" y="4.500" width="5.500" height="9.500" rx="1.500" fill="#444"/><rect x="9.500" y="4.500" width="5.500" height="9.500" rx="1.500" fill="#444"/><rect x="2" y="1" width="3.500" height="5" fill="#444"/><rect x="10.500" y="1" width="3.500" height="5" fill="#444"/><rect x="6" y="6" width="4" height="3.500" fill="#444"/></svg>
<span class="a t" style="left:3246.40px;top:58.00px;line-height:16px;font:400 12px 'Liberation Sans', sans-serif;color:#444;letter-spacing:-0.581px;">Find</span>
<svg class="a" style="left:3278.5px;top:63.5px;" width="5" height="3" viewBox="0 0 5 3"><path d="M0 0H5L2.5 3Z" fill="#666"/></svg>
<span class="a t" style="left:3227.00px;top:77.00px;line-height:14px;font:400 10.5px 'Liberation Sans', sans-serif;color:#444;">a<span style="color:#aaa">b</span></span>
<span class="a t" style="left:3232.00px;top:86.00px;line-height:14px;font:400 11.5px 'Liberation Sans', sans-serif;color:#444;">a<span style="color:#2b67b5">c</span></span>
<svg class="a" style="left:3227px;top:89px;" width="5" height="6" viewBox="0 0 5 6"><path d="M1 0V3.200H4.500M3 1.500L4.700 3.200 3 4.900" fill="none" stroke="#2b67b5" stroke-width="1"/></svg>
<span class="a t" style="left:3246.00px;top:81.00px;line-height:16px;font:400 12px 'Liberation Sans', sans-serif;color:#444;letter-spacing:-0.505px;">Replace</span>
<svg class="a" style="left:3230px;top:103px;" width="11" height="16" viewBox="0 0 11 16"><path d="M1.500 1V13L4.500 10.300 6.800 15 8.600 14.100 6.400 9.600H10.300Z" fill="#fff" stroke="#444" stroke-width="1"/></svg>
<span class="a t" style="left:3246.00px;top:104.00px;line-height:16px;font:400 12px 'Liberation Sans', sans-serif;color:#444;letter-spacing:-0.572px;">Select</span>
<svg class="a" style="left:3280.5px;top:110.0px;" width="5" height="3" viewBox="0 0 5 3"><path d="M0 0H5L2.5 3Z" fill="#666"/></svg>
<span class="a t" style="left:3240.00px;top:127.00px;line-height:16px;font:400 12px 'Liberation Sans', sans-serif;color:#444;letter-spacing:-0.051px;">Editing</span>
<div class="a" style="left:3298px;top:54px;width:1px;height:84px;background:#d4d4d4;"></div>
<svg class="a" style="left:3340px;top:130px;" width="10" height="7" viewBox="0 0 10 7"><path d="M1 6L5 2 9 6" fill="none" stroke="#444" stroke-width="1.600"/></svg>
<div class="a" style="left:1680px;top:148px;width:1680px;height:879px;background:linear-gradient(#f5f5f5,#e8e8e8);"></div>
<div class="a" style="left:1680px;top:143px;width:1680px;height:5px;background:#f5f5f5;"></div>
<div class="a" style="left:1680px;top:143px;width:22px;height:21px;background:#f5f5f5;border:3px solid #c8c8c8;box-sizing:border-box;"></div>
<svg class="a" style="left:1688.5px;top:151.5px;" width="7" height="7" viewBox="0 0 7 7"><path d="M1 0V5.200H6.500" fill="none" stroke="#555" stroke-width="1.700"/></svg>
<div class="a" style="left:2114px;top:148px;width:816px;height:10px;background:#c8c8c8;"></div>
<div class="a" style="left:2186px;top:148px;width:672px;height:10px;background:#fff;"></div>
<svg class="a" style="left:2114px;top:148px;" width="816" height="10" viewBox="0 0 816 10"><rect x="-0.5" y="4.800" width="1" height="1.700" fill="#333"/><rect x="11.5" y="4.800" width="1" height="1.700" fill="#333"/><rect x="23.5" y="2.500" width="1" height="6" fill="#333"/><rect x="35.5" y="4.800" width="1" height="1.700" fill="#333"/><rect x="47.5" y="4.800" width="1" height="1.700" fill="#333"/><rect x="59.5" y="4.800" width="1" height="1.700" fill="#333"/><rect x="83.5" y="4.800" width="1" height="1.700" fill="#333"/><rect x="95.5" y="4.800" width="1" height="1.700" fill="#333"/><rect x="107.5" y="4.800" width="1" height="1.700" fill="#333"/><rect x="119.5" y="2.500" width="1" height="6" fill="#333"/><rect x="131.5" y="4.800" width="1" height="1.700" fill="#333"/><rect x="143.5" y="4.800" width="1" height="1.700" fill="#333"/><rect x="155.5" y="4.800" width="1" height="1.700" fill="#333"/><rect x="179.5" y="4.800" width="1" height="1.700" fill="#333"/><rect x="191.5" y="4.800" width="1" height="1.700" fill="#333"/><rect x="203.5" y="4.800" width="1" height="1.700" fill="#333"/><rect x="215.5" y="2.500" width="1" height="6" fill="#333"/><rect x="227.5" y="4.800" width="1" height="1.700" fill="#333"/><rect x="239.5" y="4.800" width="1" height="1.700" fill="#333"/><rect x="251.5" y="4.800" width="1" height="1.700" fill="#333"/><rect x="275.5" y="4.800" width="1" height="1.700" fill="#333"/><rect x="287.5" y="4.800" width="1" height="1.700" fill="#333"/><rect x="299.5" y="4.800" width="1" height="1.700" fill="#333"/><rect x="311.5" y="2.500" width="1" height="6" fill="#333"/><rect x="323.5" y="4.800" width="1" height="1.700" fill="#333"/><rect x="335.5" y="4.800" width="1" height="1.700" fill="#333"/><rect x="347.5" y="4.800" width="1" height="1.700" fill="#333"/><rect x="371.5" y="4.800" width="1" height="1.700" fill="#333"/><rect x="383.5" y="4.800" width="1" height="1.700" fill="#333"/><rect x="395.5" y="4.800" width="1" height="1.700" fill="#333"/><rect x="407.5" y="2.500" width="1" height="6" fill="#333"/><rect x="419.5" y="4.800" width="1" height="1.700" fill="#333"/><rect x="431.5" y="4.800" width="1" height="1.700" fill="#333"/><rect x="443.5" y="4.800" width="1" height="1.700" fill="#333"/><rect x="467.5" y="4.800" width="1" height="1.700" fill="#333"/><rect x="479.5" y="4.800" width="1" height="1.700" fill="#333"/><rect x="491.5" y="4.800" width="1" height="1.700" fill="#333"/><rect x="503.5" y="2.500" width="1" height="6" fill="#333"/><rect x="515.5" y="4.800" width="1" height="1.700" fill="#333"/><rect x="527.5" y="4.800" width="1" height="1.700" fill="#333"/><rect x="539.5" y="4.800" width="1" height="1.700" fill="#333"/><rect x="563.5" y="4.800" width="1" height="1.700" fill="#333"/><rect x="575.5" y="4.800" width="1" height="1.700" fill="#333"/><rect x="587.5" y="4.800" width="1" height="1.700" fill="#333"/><rect x="599.5" y="2.500" width="1" height="6" fill="#333"/><rect x="611.5" y="4.800" width="1" height="1.700" fill="#333"/><rect x="623.5" y="4.800" width="1" height="1.700" fill="#333"/><rect x="635.5" y="4.800" width="1" height="1.700" fill="#333"/><rect x="659.5" y="4.800" width="1" height="1.700" fill="#333"/><rect x="671.5" y="4.800" width="1" height="1.700" fill="#333"/><rect x="683.5" y="4.800" width="1" height="1.700" fill="#333"/><rect x="695.5" y="2.500" width="1" height="6" fill="#333"/><rect x="707.5" y="4.800" width="1" height="1.700" fill="#333"/><rect x="719.5" y="4.800" width="1" height="1.700" fill="#333"/><rect x="731.5" y="4.800" width="1" height="1.700" fill="#333"/><rect x="755.5" y="4.800" width="1" height="1.700" fill="#333"/><rect x="767.5" y="4.800" width="1" height="1.700" fill="#333"/><rect x="779.5" y="4.800" width="1" height="1.700" fill="#333"/><rect x="791.5" y="2.500" width="1" height="6" fill="#333"/><rect x="803.5" y="4.800" width="1" height="1.700" fill="#333"/><rect x="815.5" y="4.800" width="1" height="1.700" fill="#333"/></svg>
<span class="a t" style="left:2279.35px;top:148.00px;line-height:12px;font:400 9.5px 'Liberation Sans', sans-serif;color:#333;">1</span>
<span class="a t" style="left:2375.35px;top:148.00px;line-height:12px;font:400 9.5px 'Liberation Sans', sans-serif;color:#333;">2</span>
<span class="a t" style="left:2471.35px;top:148.00px;line-height:12px;font:400 9.5px 'Liberation Sans', sans-serif;color:#333;">3</span>
<span class="a t" style="left:2567.35px;top:148.00px;line-height:12px;font:400 9.5px 'Liberation Sans', sans-serif;color:#333;">4</span>
<span class="a t" style="left:2663.35px;top:148.00px;line-height:12px;font:400 9.5px 'Liberation Sans', sans-serif;color:#333;">5</span>
<span class="a t" style="left:2759.35px;top:148.00px;line-height:12px;font:400 9.5px 'Liberation Sans', sans-serif;color:#333;">6</span>
<svg class="a" style="left:2181px;top:144px;" width="11" height="24" viewBox="0 0 11 24"><path d="M1 1.500H10V4L5.500 9 1 4Z" fill="#fff" stroke="#777"/><path d="M5.500 9L10 14V17H1V14Z" fill="#fff" stroke="#777"/><rect x="1" y="17" width="9" height="5.500" fill="#fff" stroke="#777"/></svg>
<svg class="a" style="left:2852.5px;top:153px;" width="11" height="9" viewBox="0 0 11 9"><path d="M5.500 .800L10 5.500V8H1V5.500Z" fill="#fff" stroke="#777"/></svg>
<div class="a" style="left:1684.5px;top:166.5px;width:12px;height:860.5px;background:#dcdcdc;"></div>
<div class="a" style="left:1685px;top:166.5px;width:11px;height:808px;background:#fff;"></div>
<div class="a" style="left:1685px;top:974.5px;width:11px;height:52.5px;background:#c6c6c6;"></div>
<svg class="a" style="left:1685px;top:166.5px;" width="11" height="861" viewBox="0 0 11 861"><rect x="5.800" y="5.4" width="2.200" height="1" fill="#333"/><rect x="5.800" y="17.4" width="2.200" height="1" fill="#333"/><rect x="5.800" y="29.4" width="2.200" height="1" fill="#333"/><rect x="4" y="41.3" width="6" height="1.200" fill="#444"/><rect x="5.800" y="53.4" width="2.200" height="1" fill="#333"/><rect x="5.800" y="65.4" width="2.200" height="1" fill="#333"/><rect x="5.800" y="77.4" width="2.200" height="1" fill="#333"/><rect x="5.800" y="101.4" width="2.200" height="1" fill="#333"/><rect x="5.800" y="113.4" width="2.200" height="1" fill="#333"/><rect x="5.800" y="125.4" width="2.200" height="1" fill="#333"/><rect x="4" y="137.3" width="6" height="1.200" fill="#444"/><rect x="5.800" y="149.4" width="2.200" height="1" fill="#333"/><rect x="5.800" y="161.4" width="2.200" height="1" fill="#333"/><rect x="5.800" y="173.4" width="2.200" height="1" fill="#333"/><rect x="5.800" y="197.4" width="2.200" height="1" fill="#333"/><rect x="5.800" y="209.4" width="2.200" height="1" fill="#333"/><rect x="5.800" y="221.4" width="2.200" height="1" fill="#333"/><rect x="4" y="233.3" width="6" height="1.200" fill="#444"/><rect x="5.800" y="245.4" width="2.200" height="1" fill="#333"/><rect x="5.800" y="257.4" width="2.200" height="1" fill="#333"/><rect x="5.800" y="269.4" width="2.200" height="1" fill="#333"/><rect x="5.800" y="293.4" width="2.200" height="1" fill="#333"/><rect x="5.800" y="305.4" width="2.200" height="1" fill="#333"/><rect x="5.800" y="317.4" width="2.200" height="1" fill="#333"/><rect x="4" y="329.3" width="6" height="1.200" fill="#444"/><rect x="5.800" y="341.4" width="2.200" height="1" fill="#333"/><rect x="5.800" y="353.4" width="2.200" height="1" fill="#333"/><rect x="5.800" y="365.4" width="2.200" height="1" fill="#333"/><rect x="5.800" y="389.4" width="2.200" height="1" fill="#333"/><rect x="5.800" y="401.4" width="2.200" height="1" fill="#333"/><rect x="5.800" y="413.4" width="2.200" height="1" fill="#333"/><rect x="4" y="425.3" width="6" height="1.200" fill="#444"/><rect x="5.800" y="437.4" width="2.200" height="1" fill="#333"/><rect x="5.800" y="449.4" width="2.200" height="1" fill="#333"/><rect x="5.800" y="461.4" width="2.200" height="1" fill="#333"/><rect x="5.800" y="485.4" width="2.200" height="1" fill="#333"/><rect x="5.800" y="497.4" width="2.200" height="1" fill="#333"/><rect x="5.800" y="509.4" width="2.200" height="1" fill="#333"/><rect x="4" y="521.3" width="6" height="1.200" fill="#444"/><rect x="5.800" y="533.4" width="2.200" height="1" fill="#333"/><rect x="5.800" y="545.4" width="2.200" height="1" fill="#333"/><rect x="5.800" y="557.4" width="2.200" height="1" fill="#333"/><rect x="5.800" y="581.4" width="2.200" height="1" fill="#333"/><rect x="5.800" y="593.4" width="2.200" height="1" fill="#333"/><rect x="5.800" y="605.4" width="2.200" height="1" fill="#333"/><rect x="4" y="617.3" width="6" height="1.200" fill="#444"/><rect x="5.800" y="629.4" width="2.200" height="1" fill="#333"/><rect x="5.800" y="641.4" width="2.200" height="1" fill="#333"/><rect x="5.800" y="653.4" width="2.200" height="1" fill="#333"/><rect x="5.800" y="677.4" width="2.200" height="1" fill="#333"/><rect x="5.800" y="689.4" width="2.200" height="1" fill="#333"/><rect x="5.800" y="701.4" width="2.200" height="1" fill="#333"/><rect x="4" y="713.3" width="6" height="1.200" fill="#444"/><rect x="5.800" y="725.4" width="2.200" height="1" fill="#333"/><rect x="5.800" y="737.4" width="2.200" height="1" fill="#333"/><rect x="5.800" y="749.4" width="2.200" height="1" fill="#333"/><rect x="5.800" y="773.4" width="2.200" height="1" fill="#333"/><rect x="5.800" y="785.4" width="2.200" height="1" fill="#333"/><rect x="5.800" y="797.4" width="2.200" height="1" fill="#333"/><rect x="4" y="809.3" width="6" height="1.200" fill="#444"/><rect x="5.800" y="821.4" width="2.200" height="1" fill="#333"/><rect x="5.800" y="833.4" width="2.200" height="1" fill="#333"/><rect x="5.800" y="845.4" width="2.200" height="1" fill="#333"/></svg>
<span class="a t" style="left:1688.65px;top:251.00px;line-height:12px;font:400 9.5px 'Liberation Sans', sans-serif;color:#333;transform:rotate(-90deg);">2</span>
<span class="a t" style="left:1688.65px;top:347.00px;line-height:12px;font:400 9.5px 'Liberation Sans', sans-serif;color:#333;transform:rotate(-90deg);">3</span>
<span class="a t" style="left:1688.65px;top:443.00px;line-height:12px;font:400 9.5px 'Liberation Sans', sans-serif;color:#333;transform:rotate(-90deg);">4</span>
<span class="a t" style="left:1688.65px;top:539.00px;line-height:12px;font:400 9.5px 'Liberation Sans', sans-serif;color:#333;transform:rotate(-90deg);">5</span>
<span class="a t" style="left:1688.65px;top:635.00px;line-height:12px;font:400 9.5px 'Liberation Sans', sans-serif;color:#333;transform:rotate(-90deg);">6</span>
<span class="a t" style="left:1688.65px;top:731.00px;line-height:12px;font:400 9.5px 'Liberation Sans', sans-serif;color:#333;transform:rotate(-90deg);">7</span>
<span class="a t" style="left:1688.65px;top:827.00px;line-height:12px;font:400 9.5px 'Liberation Sans', sans-serif;color:#333;transform:rotate(-90deg);">8</span>
<span class="a t" style="left:1688.65px;top:923.00px;line-height:12px;font:400 9.5px 'Liberation Sans', sans-serif;color:#333;transform:rotate(-90deg);">9</span>
<div class="a" style="left:1685px;top:1015px;width:11px;height:12px;overflow:hidden;"><span class="t" style="position:absolute;left:0.3px;top:2.500px;line-height:12px;font:400 9.500px 'Liberation Sans',sans-serif;color:#555;transform:rotate(-90deg);">10</span></div>
<div class="a" style="left:2115px;top:167px;width:816px;height:860px;background:#fff;"></div>
<div class="a" style="left:2115px;top:167px;width:1px;height:860px;background:#9e9e9e;"></div>
<div class="a" style="left:2930px;top:167px;width:1px;height:860px;background:#9e9e9e;"></div>
<div class="a" style="left:2187px;top:167px;width:672px;height:107px;overflow:hidden;background:#fff"><div class="a" style="left:0;top:-103px;width:3360px;height:1050px;transform:scale(0.2);transform-origin:0 0"><div class="a" style="left:0px;top:500px;width:1663px;height:490px;background:#fff;"></div>
<div class="a" style="left:240px;top:500px;width:234px;height:153.5px;background:#cbc0e4;"></div>
<div class="a" style="left:240px;top:542px;width:234px;height:1.5px;background:#e6e0f3;"></div>
<div class="a" style="left:240px;top:579px;width:234px;height:1.5px;background:#e6e0f3;"></div>
<div class="a" style="left:240px;top:616.5px;width:234px;height:1.5px;background:#e6e0f3;"></div>
<span class="a t" style="left:250.00px;top:518.00px;line-height:16px;font:400 13px 'Liberation Sans', sans-serif;color:#3f3560;">BioSense Platform</span>
<span class="a t" style="left:250.00px;top:555.00px;line-height:16px;font:400 13px 'Liberation Sans', sans-serif;color:#3f3560;">Community of Practice</span>
<span class="a t" style="left:250.00px;top:592.00px;line-height:16px;font:400 13px 'Liberation Sans', sans-serif;color:#3f3560;">NSSP News</span>
<span class="a t" style="left:250.00px;top:629.00px;line-height:16px;font:700 13px 'Liberation Sans', sans-serif;color:#2d2144;">Success Stories</span>
<div class="a" style="left:462px;top:521px;width:8px;height:8px;background:#3d2a6b;border-radius:4px;"></div>
<div class="a" style="left:462px;top:595.5px;width:8px;height:8px;background:#3d2a6b;border-radius:4px;"></div>
<div class="a" style="left:250px;top:666.5px;width:214.5px;height:218.5px;background:#eeeeee;"></div>
<span class="a t" style="left:258.00px;top:676.00px;line-height:16px;font:700 13px 'Liberation Sans', sans-serif;color:#222;">Get Email Updates</span>
<span class="a t" style="left:265.00px;top:720.00px;line-height:16px;font:400 12.5px 'Liberation Sans', sans-serif;color:#444;">To receive email updates</span>
<span class="a t" style="left:265.00px;top:745.00px;line-height:16px;font:400 12.5px 'Liberation Sans', sans-serif;color:#444;">about NSSP, enter your email</span>
<span class="a t" style="left:265.00px;top:770.00px;line-height:16px;font:400 12.5px 'Liberation Sans', sans-serif;color:#444;">address:</span>
<div class="a" style="left:265px;top:799px;width:183px;height:24px;background:#fff;border:1px solid #ccc;box-sizing:border-box;"></div>
<span class="a t" style="left:265.00px;top:841.00px;line-height:16px;font:400 12px 'Liberation Sans', sans-serif;color:#2a5db0;">What's this?</span>
<div class="a" style="left:378.5px;top:843.5px;width:71px;height:31.5px;background:#3d2a6b;"></div>
<span class="a t" style="left:392.82px;top:853.00px;line-height:16px;font:700 12.5px 'Liberation Sans', sans-serif;color:#fff;">Submit</span>
<div class="a" style="left:250px;top:905px;width:214.5px;height:41px;background:#3d2a6b;"></div>
<span class="a t" style="left:258.00px;top:917.00px;line-height:20px;font:700 15px 'Liberation Sans', sans-serif;color:#fff;">Related Links</span>
<span class="a t" style="left:265.00px;top:963.00px;line-height:16px;font:400 12.5px 'Liberation Sans', sans-serif;color:#2a5db0;text-decoration:underline;">BioSense 2.0 Platform</span>
<span class="a t" style="left:489.00px;top:518.00px;line-height:16px;font:400 13px 'Liberation Sans', sans-serif;color:#333;letter-spacing:0.233px;">syndromic surveillance. Your successes will inspire others.</span>
<span class="a t" style="left:489.00px;top:553.00px;line-height:16px;font:400 13px 'Liberation Sans', sans-serif;color:#333;letter-spacing:0.392px;">The <span style="color:#2a5db0;text-decoration:underline;font-style:italic">Syndromic Surveillance Success Stories from the Field Template</span>    is an online tool to create and polish your</span>
<div class="a" style="left:920px;top:552px;width:12px;height:15px;background:#c33;"></div>
<span class="a t" style="left:489.00px;top:578.00px;line-height:16px;font:400 13px 'Liberation Sans', sans-serif;color:#333;letter-spacing:0.190px;">stories about syndromic surveillance programs and successes.</span>
<span class="a t" style="left:489.00px;top:612.00px;line-height:16px;font:400 13px 'Liberation Sans', sans-serif;color:#333;letter-spacing:0.280px;">Follow the simple steps outlined in the template to develop your success story.</span>
<span class="a t" style="left:489.00px;top:649.00px;line-height:16px;font:400 13px 'Liberation Sans', sans-serif;color:#333;letter-spacing:0.212px;">Please email your completed success story to CDC's National Syndromic Surveillance Program at <span style="color:#2a5db0;text-decoration:underline">nssp@cdc.gov</span></span>
<div class="a" style="left:1217px;top:490px;width:201.5px;height:232px;background:#fff;border:4px solid #f6ecd0;box-sizing:border-box;"></div>
<div class="a" style="left:1226px;top:500px;width:58px;height:72px;background:#d98a80;"></div>
<div class="a" style="left:1290px;top:500px;width:118px;height:26px;background:#d9d9d9;"></div>
<div class="a" style="left:1290px;top:530px;width:118px;height:42px;background:#f3dcc0;"></div>
<div class="a" style="left:1296px;top:544px;width:8px;height:28px;background:#e0865a;"></div>
<div class="a" style="left:1308px;top:552px;width:8px;height:20px;background:#e0865a;"></div>
<div class="a" style="left:1320px;top:542px;width:8px;height:30px;background:#e0865a;"></div>
<div class="a" style="left:1332px;top:548px;width:8px;height:24px;background:#e0865a;"></div>
<div class="a" style="left:1344px;top:554px;width:8px;height:18px;background:#e0865a;"></div>
<div class="a" style="left:1356px;top:546px;width:8px;height:26px;background:#e0865a;"></div>
<div class="a" style="left:1368px;top:542px;width:8px;height:30px;background:#e0865a;"></div>
<div class="a" style="left:1380px;top:550px;width:8px;height:22px;background:#e0865a;"></div>
<div class="a" style="left:1392px;top:560px;width:8px;height:12px;background:#e0865a;"></div>
<div class="a" style="left:1226px;top:580px;width:58px;height:116px;background:#a9c7c4;"></div>
<div class="a" style="left:1290px;top:580px;width:118px;height:116px;background:#e4e4e4;"></div>
<div class="a" style="left:1236px;top:588px;width:32px;height:32px;background:#e7a03a;border-radius:16px;"></div>
<div class="a" style="left:1252px;top:588px;width:16px;height:16px;background:#4a5bb5;border-radius:0 16px 0 0;"></div>
<div class="a" style="left:1296px;top:620px;width:28px;height:50px;background:#9fc9c0;"></div>
<div class="a" style="left:1230px;top:704px;width:150px;height:9px;background:#4aa0dc;"></div>
<div class="a" style="left:1384px;top:700px;width:28px;height:17px;background:#1f6fc0;"></div>
<div class="a" style="left:1663px;top:500px;width:17px;height:487px;background:#f0f0f0;"></div>
<div class="a" style="left:1664px;top:500px;width:15px;height:40px;background:#cdcdcd;"></div>
<svg class="a" style="left:1667px;top:975px;" width="9" height="6" viewBox="0 0 9 6"><path d="M0.5 1L4.5 5 8.5 1Z" fill="#555"/></svg>
<div class="a" style="left:0px;top:985px;width:1680px;height:4px;background:#fff;"></div>
<div class="a" style="left:0px;top:989px;width:1680px;height:21px;background:#f0eceb;"></div>
<span class="a t" style="left:1600.00px;top:993.00px;line-height:16px;font:400 12px 'Liberation Sans', sans-serif;color:#333;">100%</span>
<div class="a" style="left:0px;top:1010px;width:1680px;height:40px;background:linear-gradient(90deg,#8196b1 0,#8499b4 40px,#a7c1df 72px,#a7c1df 1262px,#8499b4 1300px,#8398b3 1680px);"></div>
<div class="a" style="left:0px;top:1009.5px;width:1680px;height:1.5px;background:#45536a;"></div>
<div class="a" style="left:0px;top:1011px;width:1680px;height:1px;background:rgba(255,255,255,.35);"></div>
<svg class="a" style="left:6px;top:1010px;" width="42" height="40" viewBox="0 0 42 40"><defs><radialGradient id="og" cx="50%" cy="35%" r="65%"><stop offset="0" stop-color="#6db4ea"/><stop offset=".55" stop-color="#2a6fc0"/><stop offset="1" stop-color="#123c7c"/></radialGradient></defs><circle cx="20.5" cy="20" r="18.5" fill="#1d3e6e"/><circle cx="20.5" cy="20" r="17.3" fill="url(#og)"/><path d="M11.5 12.5Q15.5 10.5 19.2 12.6L17.6 19.2Q14 17.2 10 19Z" fill="#f0562c"/><path d="M21 13.2Q24.8 15.4 29.4 13.6L27.8 20.2Q23.6 22 19.4 19.8Z" fill="#8dc63f"/><path d="M9.5 20.8Q13.4 18.8 17.2 21L15.6 27.6Q11.8 25.4 8 27.4Z" fill="#2ea3e8"/><path d="M19 21.6Q22.8 23.8 27.4 22L25.8 28.6Q21.4 30.4 17.4 28.2Z" fill="#fbc314"/></svg>
<svg class="a" style="left:72px;top:1014px;" width="34" height="34" viewBox="0 0 34 34"><path d="M1.500 5.500H9L11 7.500H14V24H1.500Z" fill="#f7e3a0" stroke="#c9a243" stroke-width="1"/><path d="M9.500 8.500H17L19 10.500H23V26H9.500Z" fill="#f7e3a0" stroke="#c9a243" stroke-width="1"/><path d="M16.500 11.500H25L27 13.500H32.500V30H1.500V14H16.500Z" fill="#fbeaad" stroke="#c9a243" stroke-width="1"/><rect x="4" y="3.800" width="3.500" height="2.200" fill="#22b14c"/><rect x="12.500" y="6.500" width="3.500" height="2.200" fill="#d13a2a"/><rect x="20.500" y="9.500" width="3.500" height="2.200" fill="#2f8fe8"/><path d="M5.500 32.500V23.500Q5.500 20.500 8.500 20.500H25.500Q28.500 20.500 28.500 23.500V32.500H23.500V25.500H10.500V32.500Z" fill="#a8ddf5" stroke="#4aa3d8" stroke-width="1"/></svg>
<svg class="a" style="left:134px;top:1013px;" width="34" height="34" viewBox="0 0 32 32"><rect x="15" y="6" width="14" height="20" fill="#fff" stroke="#1e7145" stroke-width="1.4"/><path d="M20 10H27" stroke="#1e7145" stroke-width="1.6"/><path d="M20 13.2H27" stroke="#1e7145" stroke-width="1.6"/><path d="M20 16.4H27" stroke="#1e7145" stroke-width="1.6"/><path d="M20 19.6H27" stroke="#1e7145" stroke-width="1.6"/><path d="M20 22.8H27" stroke="#1e7145" stroke-width="1.6"/><path d="M23.5 8V24" stroke="#fff" stroke-width="1"/><path d="M2 5.5L19 2V30L2 26.5Z" fill="#1e7145"/><text x="10.5" y="21.5" text-anchor="middle" font-family="Liberation Sans, sans-serif" font-weight="700" font-size="14" fill="#fff">X</text></svg>
<svg class="a" style="left:196px;top:1013px;" width="34" height="34" viewBox="0 0 32 32"><rect x="15" y="6" width="14" height="20" fill="#fff" stroke="#2b579a" stroke-width="1.4"/><path d="M20 10H27" stroke="#2b579a" stroke-width="1.3"/><path d="M20 13H27" stroke="#2b579a" stroke-width="1.3"/><path d="M20 16H27" stroke="#2b579a" stroke-width="1.3"/><path d="M20 19H27" stroke="#2b579a" stroke-width="1.3"/><path d="M20 22H27" stroke="#2b579a" stroke-width="1.3"/><path d="M2 5.5L19 2V30L2 26.5Z" fill="#2b579a"/><text x="10.5" y="21.5" text-anchor="middle" font-family="Liberation Sans, sans-serif" font-weight="700" font-size="14" fill="#fff">W</text></svg>
<div class="a" style="left:249px;top:1011px;width:55px;height:39px;background:linear-gradient(160deg,#e6eef8 0%,#cfdcee 45%,#bccde4 55%,#c9d8ec 100%);border:1px solid #4a576b;box-sizing:border-box;border-radius:3px 3px 0 0;border-bottom:none;box-shadow:inset 0 0 0 1px rgba(255,255,255,.7);"></div>
<div class="a" style="left:245px;top:1011px;width:54px;height:39px;background:linear-gradient(160deg,#e6eef8 0%,#cfdcee 45%,#bccde4 55%,#c9d8ec 100%);border:1px solid #4a576b;box-sizing:border-box;border-radius:3px 3px 0 0;border-bottom:none;box-shadow:inset 0 0 0 1px rgba(255,255,255,.7);"></div>
<svg class="a" style="left:255px;top:1014px;" width="34" height="34" viewBox="0 0 34 34"><defs><linearGradient id="ieg" x1="0" y1="0" x2="0" y2="1"><stop offset="0" stop-color="#7fd0f5"/><stop offset=".55" stop-color="#2fa5e6"/><stop offset="1" stop-color="#1b86d0"/></linearGradient></defs><text x="17.500" y="31" text-anchor="middle" font-family="Liberation Sans, sans-serif" font-weight="700" font-size="54" fill="url(#ieg)" transform="translate(18 0) scale(1.1 1) translate(-18 0)">e</text><path d="M4.500 31C-3 25 5 10 18 4C25 .800 31.500 2 30.500 8" fill="none" stroke="#f6b80d" stroke-width="2.800"/><path d="M4.500 31C7 33 11 32 14 30" fill="none" stroke="#f6b80d" stroke-width="2"/></svg>
<svg class="a" style="left:320px;top:1013px;" width="34" height="34" viewBox="0 0 32 32"><rect x="15" y="8" width="15" height="14" fill="#fff" stroke="#0f6fc6" stroke-width="1.4"/><path d="M15.5 9L22.5 15.5 29.5 9" fill="none" stroke="#0f6fc6" stroke-width="1.4"/><path d="M2 5.5L19 2V30L2 26.5Z" fill="#0f6fc6"/><text x="10.5" y="21.5" text-anchor="middle" font-family="Liberation Sans, sans-serif" font-weight="700" font-size="14" fill="#fff">O</text></svg>
<div class="a" style="left:369px;top:1011px;width:59px;height:39px;background:linear-gradient(160deg,#e6eef8 0%,#cfdcee 45%,#bccde4 55%,#c9d8ec 100%);border:1px solid #4a576b;box-sizing:border-box;border-radius:3px 3px 0 0;border-bottom:none;box-shadow:inset 0 0 0 1px rgba(255,255,255,.7);"></div>
<svg class="a" style="left:381.5px;top:1012.5px;" width="34.0" height="34.0" viewBox="0 0 34 34"><circle cx="11.500" cy="11" r="8.300" fill="#19b5ef"/><circle cx="20.500" cy="21.500" r="8.300" fill="#19b5ef"/><circle cx="16" cy="16" r="11.800" fill="#19b5ef"/><g transform="translate(16 16) scale(.82) translate(-16 -16)"><circle cx="11.500" cy="11" r="8.300" fill="#fff"/><circle cx="20.500" cy="21.500" r="8.300" fill="#fff"/><circle cx="16" cy="16" r="11.800" fill="#fff"/></g><text x="16" y="24" text-anchor="middle" font-family="Liberation Sans, sans-serif" font-weight="700" font-size="22" fill="#19b5ef">S</text><circle cx="27" cy="28" r="5.900" fill="#fff"/><circle cx="27" cy="28" r="5" fill="#e8112d"/></svg>
<div class="a" style="left:431px;top:1011px;width:59px;height:39px;background:linear-gradient(160deg,#e6eef8 0%,#cfdcee 45%,#bccde4 55%,#c9d8ec 100%);border:1px solid #4a576b;box-sizing:border-box;border-radius:3px 3px 0 0;border-bottom:none;box-shadow:inset 0 0 0 1px rgba(255,255,255,.7);"></div>
<svg class="a" style="left:443.7px;top:1013px;" width="34" height="34" viewBox="0 0 32 32"><rect x="15" y="6" width="14" height="20" fill="#fff" stroke="#1e7145" stroke-width="1.4"/><path d="M20 10H27" stroke="#1e7145" stroke-width="1.6"/><path d="M20 13.2H27" stroke="#1e7145" stroke-width="1.6"/><path d="M20 16.4H27" stroke="#1e7145" stroke-width="1.6"/><path d="M20 19.6H27" stroke="#1e7145" stroke-width="1.6"/><path d="M20 22.8H27" stroke="#1e7145" stroke-width="1.6"/><path d="M23.5 8V24" stroke="#fff" stroke-width="1"/><path d="M2 5.5L19 2V30L2 26.5Z" fill="#1e7145"/><text x="10.5" y="21.5" text-anchor="middle" font-family="Liberation Sans, sans-serif" font-weight="700" font-size="14" fill="#fff">X</text></svg>
<div class="a" style="left:493px;top:1011px;width:59px;height:39px;background:linear-gradient(160deg,#e6eef8 0%,#cfdcee 45%,#bccde4 55%,#c9d8ec 100%);border:1px solid #4a576b;box-sizing:border-box;border-radius:3px 3px 0 0;border-bottom:none;box-shadow:inset 0 0 0 1px rgba(255,255,255,.7);"></div>
<svg class="a" style="left:505.70000000000005px;top:1013px;" width="34" height="34" viewBox="0 0 32 32"><rect x="15" y="6" width="14" height="20" fill="#fff" stroke="#2b579a" stroke-width="1.4"/><path d="M20 10H27" stroke="#2b579a" stroke-width="1.3"/><path d="M20 13H27" stroke="#2b579a" stroke-width="1.3"/><path d="M20 16H27" stroke="#2b579a" stroke-width="1.3"/><path d="M20 19H27" stroke="#2b579a" stroke-width="1.3"/><path d="M20 22H27" stroke="#2b579a" stroke-width="1.3"/><path d="M2 5.5L19 2V30L2 26.5Z" fill="#2b579a"/><text x="10.5" y="21.5" text-anchor="middle" font-family="Liberation Sans, sans-serif" font-weight="700" font-size="14" fill="#fff">W</text></svg>
<svg class="a" style="left:1306.2px;top:1022.0px;" width="17.0" height="17.0" viewBox="0 0 34 34"><circle cx="11.500" cy="11" r="8.300" fill="#19b5ef"/><circle cx="20.500" cy="21.500" r="8.300" fill="#19b5ef"/><circle cx="16" cy="16" r="11.800" fill="#19b5ef"/><g transform="translate(16 16) scale(.82) translate(-16 -16)"><circle cx="11.500" cy="11" r="8.300" fill="#fff"/><circle cx="20.500" cy="21.500" r="8.300" fill="#fff"/><circle cx="16" cy="16" r="11.800" fill="#fff"/></g><text x="16" y="24" text-anchor="middle" font-family="Liberation Sans, sans-serif" font-weight="700" font-size="22" fill="#19b5ef">S</text><circle cx="27" cy="28" r="5.900" fill="#fff"/><circle cx="27" cy="28" r="5" fill="#e8112d"/></svg>
<svg class="a" style="left:1331px;top:1023px;" width="16" height="16" viewBox="0 0 16 16"><circle cx="8" cy="8" r="7.5" fill="#3f9a3a" stroke="#2a6d27" stroke-width="1"/><path d="M4 7.2A4.2 4.2 0 0 1 11.4 5.4L12.6 4.2V8.2H8.6L10 6.8A2.6 2.6 0 0 0 5.6 7.6ZM12 8.8A4.2 4.2 0 0 1 4.6 10.6L3.4 11.8V7.8H7.4L6 9.2A2.6 2.6 0 0 0 10.4 8.4Z" fill="#f4e04a"/></svg>
<svg class="a" style="left:1354.5px;top:1023px;" width="17" height="17" viewBox="0 0 17 17"><rect x="4.5" y="1" width="8" height="6" fill="#fff" stroke="#777"/><rect x="1" y="6" width="15" height="7" rx="1.5" fill="#e9ecf2" stroke="#333"/><rect x="3.5" y="11" width="10" height="5" fill="#fff" stroke="#333"/><rect x="4" y="8.5" width="9" height="2" fill="#8fb0e0"/></svg>
<svg class="a" style="left:1378.5px;top:1023px;" width="17" height="16" viewBox="0 0 17 16"><rect x="1" y="1" width="14.5" height="10" fill="#c8c8c8" stroke="#2a3a9a" stroke-width="1.4"/><path d="M2 14.5H7M10 14.5H15M1 12.5H16" stroke="#2a3a9a" stroke-width="1.4"/></svg>
<svg class="a" style="left:1403px;top:1023px;" width="17" height="17" viewBox="0 0 17 17"><path d="M2.5 1.5L4 4" stroke="#999"/><path d="M3 5.5L8 2.5 14.5 11 9.5 14.5Z" fill="#9a9a9a" stroke="#666" stroke-width=".8"/><path d="M10.5 12.5L14 10 16 13 12.5 15.5Z" fill="#2a35c9"/><path d="M11.8 13.4L14.2 11.7" stroke="#fff"/></svg>
<svg class="a" style="left:1427px;top:1023px;" width="17" height="16" viewBox="0 0 17 16"><rect x=".7" y="1" width="15.6" height="11" fill="#0c1f4a" stroke="#111" stroke-width="1"/><path d="M5 10V5.5H7V10M8.5 10V3.5H10V10M11 10V6.5H12.4V10" fill="none" stroke="#7fb2ff" stroke-width="1.2"/><circle cx="6" cy="4" r="1.3" fill="#cfe0ff"/><path d="M4 14.5H13M8.5 12V14.5" stroke="#111" stroke-width="1.4"/></svg>
<svg class="a" style="left:1450px;top:1022.5px;" width="16" height="17" viewBox="0 0 16 17"><path d="M4.2 8V4.8A3.8 3.8 0 0 1 11.8 4.8V8" fill="none" stroke="#8d8d8d" stroke-width="2"/><rect x="1.5" y="7.5" width="13" height="8.5" rx="1" fill="#f5c426" stroke="#b88a0c" stroke-width="1"/><rect x="7" y="10" width="2" height="3.4" fill="#3b2b00"/></svg>
<svg class="a" style="left:1473px;top:1022.5px;" width="18" height="17" viewBox="0 0 18 17"><rect x="5" y="0.5" width="4" height="3.5" fill="#ddd" stroke="#777" stroke-width=".8"/><path d="M3.5 4H10.5V10L8.5 12V15.5H5.5V12L3.5 10Z" fill="#777" stroke="#555" stroke-width=".8"/><circle cx="12.5" cy="11.5" r="4.6" fill="#2fa32f" stroke="#1c6d1c" stroke-width=".8"/><path d="M10.2 11.6L12 13.4 14.9 9.8" fill="none" stroke="#fff" stroke-width="1.5"/></svg>
<svg class="a" style="left:1498.5px;top:1022.5px;" width="17" height="17" viewBox="0 0 17 17"><rect x=".5" y=".5" width="16" height="16" fill="#79c143" stroke="#5aa02c"/><path d="M8.5 3C6.5 4.2 4.8 4.4 3.2 4.4 3.2 9 4.8 12.4 8.5 14.2 12.2 12.4 13.8 9 13.8 4.4 12.2 4.4 10.5 4.2 8.5 3Z" fill="#fff"/><path d="M8.5 3V14.2M3.3 8H13.7" stroke="#79c143" stroke-width="1.3"/></svg>
<svg class="a" style="left:1522px;top:1022.5px;filter:drop-shadow(0 0 .6px #1a2230) drop-shadow(0 0 .5px #1a2230);" width="18" height="17" viewBox="0 0 18 17"><path d="M2.5 3.5H7V14.5H2.5Z" fill="none" stroke="#fff" stroke-width="1.3"/><path d="M7.5 2.5H10M7.5 15.5H10" stroke="#fff" stroke-width="1.3"/><path d="M9 1V4.5M13 1V4.5" stroke="#fff" stroke-width="1.6"/><path d="M7.5 4.5H14.5V8Q14.5 10.5 11 10.5Q7.5 10.5 7.5 8Z" fill="#fff"/><path d="M11 10.5V16" stroke="#fff" stroke-width="1.8"/></svg>
<svg class="a" style="left:1546px;top:1022.5px;filter:drop-shadow(0 0 .6px #1a2230) drop-shadow(0 0 .5px #1a2230);" width="18" height="17" viewBox="0 0 18 17"><path d="M2 1V5M5 1V5" stroke="#fff" stroke-width="1.3"/><path d="M1 4.5H6V8H1Z" fill="#fff"/><path d="M3.5 8V13.5H6" fill="none" stroke="#fff" stroke-width="1.3"/><rect x="6.5" y="4.5" width="10" height="8" fill="#8ea0b8" stroke="#fff" stroke-width="1.3"/><path d="M8 15.5H15M11.5 13V15.5" stroke="#fff" stroke-width="1.3"/></svg>
<svg class="a" style="left:1569.5px;top:1022.5px;filter:drop-shadow(0 0 .6px #1a2230) drop-shadow(0 0 .5px #1a2230);" width="18" height="17" viewBox="0 0 18 17"><path d="M1.5 6H4.5L8.5 2V15L4.5 11H1.5Z" fill="#fff" stroke="#d8dde6" stroke-width=".6"/><path d="M10.8 5.8A4 4 0 0 1 10.8 11.2M12.8 3.8A7 7 0 0 1 12.8 13.2M14.8 2A10 10 0 0 1 14.8 15" fill="none" stroke="#fff" stroke-width="1.1"/></svg>
<span class="a t" style="left:1607.60px;top:1016.00px;line-height:16px;font:400 12px 'Liberation Sans', sans-serif;color:#fff;letter-spacing:-0.105px;">9:07 AM</span>
<span class="a t" style="left:1606.70px;top:1033.00px;line-height:16px;font:400 12px 'Liberation Sans', sans-serif;color:#fff;letter-spacing:-0.131px;">9/7/2016</span>
<div class="a" style="left:1666px;top:1011px;width:14px;height:39px;background:linear-gradient(135deg,#9fb2cb,#75889f 60%,#8da0b9);border:1px solid #5f7088;box-sizing:border-box;box-shadow:inset 0 0 0 1px rgba(255,255,255,.35);"></div>
<div class="a" style="left:1680px;top:148px;width:1680px;height:879px;background:linear-gradient(#f5f5f5,#e8e8e8);"></div>
<div class="a" style="left:1680px;top:143px;width:1680px;height:5px;background:#f5f5f5;"></div>
<div class="a" style="left:1680px;top:143px;width:22px;height:21px;background:#f5f5f5;border:3px solid #c8c8c8;box-sizing:border-box;"></div>
<svg class="a" style="left:1688.5px;top:151.5px;" width="7" height="7" viewBox="0 0 7 7"><path d="M1 0V5.200H6.500" fill="none" stroke="#555" stroke-width="1.700"/></svg>
<div class="a" style="left:2114px;top:148px;width:816px;height:10px;background:#c8c8c8;"></div>
<div class="a" style="left:2186px;top:148px;width:672px;height:10px;background:#fff;"></div>
<svg class="a" style="left:2114px;top:148px;" width="816" height="10" viewBox="0 0 816 10"><rect x="-0.5" y="4.800" width="1" height="1.700" fill="#333"/><rect x="11.5" y="4.800" width="1" height="1.700" fill="#333"/><rect x="23.5" y="2.500" width="1" height="6" fill="#333"/><rect x="35.5" y="4.800" width="1" height="1.700" fill="#333"/><rect x="47.5" y="4.800" width="1" height="1.700" fill="#333"/><rect x="59.5" y="4.800" width="1" height="1.700" fill="#333"/><rect x="83.5" y="4.800" width="1" height="1.700" fill="#333"/><rect x="95.5" y="4.800" width="1" height="1.700" fill="#333"/><rect x="107.5" y="4.800" width="1" height="1.700" fill="#333"/><rect x="119.5" y="2.500" width="1" height="6" fill="#333"/><rect x="131.5" y="4.800" width="1" height="1.700" fill="#333"/><rect x="143.5" y="4.800" width="1" height="1.700" fill="#333"/><rect x="155.5" y="4.800" width="1" height="1.700" fill="#333"/><rect x="179.5" y="4.800" width="1" height="1.700" fill="#333"/><rect x="191.5" y="4.800" width="1" height="1.700" fill="#333"/><rect x="203.5" y="4.800" width="1" height="1.700" fill="#333"/><rect x="215.5" y="2.500" width="1" height="6" fill="#333"/><rect x="227.5" y="4.800" width="1" height="1.700" fill="#333"/><rect x="239.5" y="4.800" width="1" height="1.700" fill="#333"/><rect x="251.5" y="4.800" width="1" height="1.700" fill="#333"/><rect x="275.5" y="4.800" width="1" height="1.700" fill="#333"/><rect x="287.5" y="4.800" width="1" height="1.700" fill="#333"/><rect x="299.5" y="4.800" width="1" height="1.700" fill="#333"/><rect x="311.5" y="2.500" width="1" height="6" fill="#333"/><rect x="323.5" y="4.800" width="1" height="1.700" fill="#333"/><rect x="335.5" y="4.800" width="1" height="1.700" fill="#333"/><rect x="347.5" y="4.800" width="1" height="1.700" fill="#333"/><rect x="371.5" y="4.800" width="1" height="1.700" fill="#333"/><rect x="383.5" y="4.800" width="1" height="1.700" fill="#333"/><rect x="395.5" y="4.800" width="1" height="1.700" fill="#333"/><rect x="407.5" y="2.500" width="1" height="6" fill="#333"/><rect x="419.5" y="4.800" width="1" height="1.700" fill="#333"/><rect x="431.5" y="4.800" width="1" height="1.700" fill="#333"/><rect x="443.5" y="4.800" width="1" height="1.700" fill="#333"/><rect x="467.5" y="4.800" width="1" height="1.700" fill="#333"/><rect x="479.5" y="4.800" width="1" height="1.700" fill="#333"/><rect x="491.5" y="4.800" width="1" height="1.700" fill="#333"/><rect x="503.5" y="2.500" width="1" height="6" fill="#333"/><rect x="515.5" y="4.800" width="1" height="1.700" fill="#333"/><rect x="527.5" y="4.800" width="1" height="1.700" fill="#333"/><rect x="539.5" y="4.800" width="1" height="1.700" fill="#333"/><rect x="563.5" y="4.800" width="1" height="1.700" fill="#333"/><rect x="575.5" y="4.800" width="1" height="1.700" fill="#333"/><rect x="587.5" y="4.800" width="1" height="1.700" fill="#333"/><rect x="599.5" y="2.500" width="1" height="6" fill="#333"/><rect x="611.5" y="4.800" width="1" height="1.700" fill="#333"/><rect x="623.5" y="4.800" width="1" height="1.700" fill="#333"/><rect x="635.5" y="4.800" width="1" height="1.700" fill="#333"/><rect x="659.5" y="4.800" width="1" height="1.700" fill="#333"/><rect x="671.5" y="4.800" width="1" height="1.700" fill="#333"/><rect x="683.5" y="4.800" width="1" height="1.700" fill="#333"/><rect x="695.5" y="2.500" width="1" height="6" fill="#333"/><rect x="707.5" y="4.800" width="1" height="1.700" fill="#333"/><rect x="719.5" y="4.800" width="1" height="1.700" fill="#333"/><rect x="731.5" y="4.800" width="1" height="1.700" fill="#333"/><rect x="755.5" y="4.800" width="1" height="1.700" fill="#333"/><rect x="767.5" y="4.800" width="1" height="1.700" fill="#333"/><rect x="779.5" y="4.800" width="1" height="1.700" fill="#333"/><rect x="791.5" y="2.500" width="1" height="6" fill="#333"/><rect x="803.5" y="4.800" width="1" height="1.700" fill="#333"/><rect x="815.5" y="4.800" width="1" height="1.700" fill="#333"/></svg>
<span class="a t" style="left:2279.35px;top:148.00px;line-height:12px;font:400 9.5px 'Liberation Sans', sans-serif;color:#333;">1</span>
<span class="a t" style="left:2375.35px;top:148.00px;line-height:12px;font:400 9.5px 'Liberation Sans', sans-serif;color:#333;">2</span>
<span class="a t" style="left:2471.35px;top:148.00px;line-height:12px;font:400 9.5px 'Liberation Sans', sans-serif;color:#333;">3</span>
<span class="a t" style="left:2567.35px;top:148.00px;line-height:12px;font:400 9.5px 'Liberation Sans', sans-serif;color:#333;">4</span>
<span class="a t" style="left:2663.35px;top:148.00px;line-height:12px;font:400 9.5px 'Liberation Sans', sans-serif;color:#333;">5</span>
<span class="a t" style="left:2759.35px;top:148.00px;line-height:12px;font:400 9.5px 'Liberation Sans', sans-serif;color:#333;">6</span>
<svg class="a" style="left:2181px;top:144px;" width="11" height="24" viewBox="0 0 11 24"><path d="M1 1.500H10V4L5.500 9 1 4Z" fill="#fff" stroke="#777"/><path d="M5.500 9L10 14V17H1V14Z" fill="#fff" stroke="#777"/><rect x="1" y="17" width="9" height="5.500" fill="#fff" stroke="#777"/></svg>
<svg class="a" style="left:2852.5px;top:153px;" width="11" height="9" viewBox="0 0 11 9"><path d="M5.500 .800L10 5.500V8H1V5.500Z" fill="#fff" stroke="#777"/></svg>
<div class="a" style="left:1684.5px;top:166.5px;width:12px;height:860.5px;background:#dcdcdc;"></div>
<div class="a" style="left:1685px;top:166.5px;width:11px;height:808px;background:#fff;"></div>
<div class="a" style="left:1685px;top:974.5px;width:11px;height:52.5px;background:#c6c6c6;"></div>
<svg class="a" style="left:1685px;top:166.5px;" width="11" height="861" viewBox="0 0 11 861"><rect x="5.800" y="5.4" width="2.200" height="1" fill="#333"/><rect x="5.800" y="17.4" width="2.200" height="1" fill="#333"/><rect x="5.800" y="29.4" width="2.200" height="1" fill="#333"/><rect x="4" y="41.3" width="6" height="1.200" fill="#444"/><rect x="5.800" y="53.4" width="2.200" height="1" fill="#333"/><rect x="5.800" y="65.4" width="2.200" height="1" fill="#333"/><rect x="5.800" y="77.4" width="2.200" height="1" fill="#333"/><rect x="5.800" y="101.4" width="2.200" height="1" fill="#333"/><rect x="5.800" y="113.4" width="2.200" height="1" fill="#333"/><rect x="5.800" y="125.4" width="2.200" height="1" fill="#333"/><rect x="4" y="137.3" width="6" height="1.200" fill="#444"/><rect x="5.800" y="149.4" width="2.200" height="1" fill="#333"/><rect x="5.800" y="161.4" width="2.200" height="1" fill="#333"/><rect x="5.800" y="173.4" width="2.200" height="1" fill="#333"/><rect x="5.800" y="197.4" width="2.200" height="1" fill="#333"/><rect x="5.800" y="209.4" width="2.200" height="1" fill="#333"/><rect x="5.800" y="221.4" width="2.200" height="1" fill="#333"/><rect x="4" y="233.3" width="6" height="1.200" fill="#444"/><rect x="5.800" y="245.4" width="2.200" height="1" fill="#333"/><rect x="5.800" y="257.4" width="2.200" height="1" fill="#333"/><rect x="5.800" y="269.4" width="2.200" height="1" fill="#333"/><rect x="5.800" y="293.4" width="2.200" height="1" fill="#333"/><rect x="5.800" y="305.4" width="2.200" height="1" fill="#333"/><rect x="5.800" y="317.4" width="2.200" height="1" fill="#333"/><rect x="4" y="329.3" width="6" height="1.200" fill="#444"/><rect x="5.800" y="341.4" width="2.200" height="1" fill="#333"/><rect x="5.800" y="353.4" width="2.200" height="1" fill="#333"/><rect x="5.800" y="365.4" width="2.200" height="1" fill="#333"/><rect x="5.800" y="389.4" width="2.200" height="1" fill="#333"/><rect x="5.800" y="401.4" width="2.200" height="1" fill="#333"/><rect x="5.800" y="413.4" width="2.200" height="1" fill="#333"/><rect x="4" y="425.3" width="6" height="1.200" fill="#444"/><rect x="5.800" y="437.4" width="2.200" height="1" fill="#333"/><rect x="5.800" y="449.4" width="2.200" height="1" fill="#333"/><rect x="5.800" y="461.4" width="2.200" height="1" fill="#333"/><rect x="5.800" y="485.4" width="2.200" height="1" fill="#333"/><rect x="5.800" y="497.4" width="2.200" height="1" fill="#333"/><rect x="5.800" y="509.4" width="2.200" height="1" fill="#333"/><rect x="4" y="521.3" width="6" height="1.200" fill="#444"/><rect x="5.800" y="533.4" width="2.200" height="1" fill="#333"/><rect x="5.800" y="545.4" width="2.200" height="1" fill="#333"/><rect x="5.800" y="557.4" width="2.200" height="1" fill="#333"/><rect x="5.800" y="581.4" width="2.200" height="1" fill="#333"/><rect x="5.800" y="593.4" width="2.200" height="1" fill="#333"/><rect x="5.800" y="605.4" width="2.200" height="1" fill="#333"/><rect x="4" y="617.3" width="6" height="1.200" fill="#444"/><rect x="5.800" y="629.4" width="2.200" height="1" fill="#333"/><rect x="5.800" y="641.4" width="2.200" height="1" fill="#333"/><rect x="5.800" y="653.4" width="2.200" height="1" fill="#333"/><rect x="5.800" y="677.4" width="2.200" height="1" fill="#333"/><rect x="5.800" y="689.4" width="2.200" height="1" fill="#333"/><rect x="5.800" y="701.4" width="2.200" height="1" fill="#333"/><rect x="4" y="713.3" width="6" height="1.200" fill="#444"/><rect x="5.800" y="725.4" width="2.200" height="1" fill="#333"/><rect x="5.800" y="737.4" width="2.200" height="1" fill="#333"/><rect x="5.800" y="749.4" width="2.200" height="1" fill="#333"/><rect x="5.800" y="773.4" width="2.200" height="1" fill="#333"/><rect x="5.800" y="785.4" width="2.200" height="1" fill="#333"/><rect x="5.800" y="797.4" width="2.200" height="1" fill="#333"/><rect x="4" y="809.3" width="6" height="1.200" fill="#444"/><rect x="5.800" y="821.4" width="2.200" height="1" fill="#333"/><rect x="5.800" y="833.4" width="2.200" height="1" fill="#333"/><rect x="5.800" y="845.4" width="2.200" height="1" fill="#333"/></svg>
<span class="a t" style="left:1688.65px;top:251.00px;line-height:12px;font:400 9.5px 'Liberation Sans', sans-serif;color:#333;transform:rotate(-90deg);">2</span>
<span class="a t" style="left:1688.65px;top:347.00px;line-height:12px;font:400 9.5px 'Liberation Sans', sans-serif;color:#333;transform:rotate(-90deg);">3</span>
<span class="a t" style="left:1688.65px;top:443.00px;line-height:12px;font:400 9.5px 'Liberation Sans', sans-serif;color:#333;transform:rotate(-90deg);">4</span>
<span class="a t" style="left:1688.65px;top:539.00px;line-height:12px;font:400 9.5px 'Liberation Sans', sans-serif;color:#333;transform:rotate(-90deg);">5</span>
<span class="a t" style="left:1688.65px;top:635.00px;line-height:12px;font:400 9.5px 'Liberation Sans', sans-serif;color:#333;transform:rotate(-90deg);">6</span>
<span class="a t" style="left:1688.65px;top:731.00px;line-height:12px;font:400 9.5px 'Liberation Sans', sans-serif;color:#333;transform:rotate(-90deg);">7</span>
<span class="a t" style="left:1688.65px;top:827.00px;line-height:12px;font:400 9.5px 'Liberation Sans', sans-serif;color:#333;transform:rotate(-90deg);">8</span>
<span class="a t" style="left:1688.65px;top:923.00px;line-height:12px;font:400 9.5px 'Liberation Sans', sans-serif;color:#333;transform:rotate(-90deg);">9</span>
<div class="a" style="left:1685px;top:1015px;width:11px;height:12px;overflow:hidden;"><span class="t" style="position:absolute;left:0.3px;top:2.500px;line-height:12px;font:400 9.500px 'Liberation Sans',sans-serif;color:#555;transform:rotate(-90deg);">10</span></div>
<div class="a" style="left:2115px;top:167px;width:816px;height:860px;background:#fff;"></div>
<div class="a" style="left:2115px;top:167px;width:1px;height:860px;background:#9e9e9e;"></div>
<div class="a" style="left:2930px;top:167px;width:1px;height:860px;background:#9e9e9e;"></div>
<div class="a" style="left:3344px;top:143px;width:16px;height:884px;background:#dadada;"></div>
<div class="a" style="left:3344px;top:145px;width:15px;height:14px;background:#fff;border:1px solid #ababab;box-sizing:border-box;"></div>
<svg class="a" style="left:3348px;top:150px;" width="7" height="4" viewBox="0 0 7 4"><path d="M0 4L3.500 0 7 4Z" fill="#555"/></svg>
<div class="a" style="left:3344px;top:160px;width:15px;height:670px;background:#fff;border:1px solid #ababab;box-sizing:border-box;"></div>
<div class="a" style="left:3344px;top:1010px;width:15px;height:14px;background:#fff;border:1px solid #ababab;box-sizing:border-box;"></div>
<svg class="a" style="left:3348px;top:1015px;" width="7" height="4" viewBox="0 0 7 4"><path d="M0 0H7L3.500 4Z" fill="#555"/></svg>
<div class="a" style="left:1680px;top:1027px;width:1680px;height:23px;background:#19478a;"></div>
<span class="a t" style="left:1687.00px;top:1032.00px;line-height:14px;font:400 11.5px 'Liberation Sans', sans-serif;color:#fff;letter-spacing:-0.745px;">PAGE 1 OF 1</span>
<span class="a t" style="left:1768.70px;top:1032.00px;line-height:14px;font:400 11.5px 'Liberation Sans', sans-serif;color:#fff;letter-spacing:-0.562px;">0 WORDS</span>
<svg class="a" style="left:1838px;top:1031px;" width="16" height="14" viewBox="0 0 16 14"><path d="M1.500 1.500H6.500Q8 1.500 8 3V11.500Q8 10 6.500 10H1.500ZM8 3Q8 1.500 9.500 1.500H10.500M8 11.500Q8 10 9.500 10H14.500V6" fill="none" stroke="#fff" stroke-width="1.200"/><path d="M10.300 4L12 5.800 15 1.500" fill="none" stroke="#fff" stroke-width="1.300"/><path d="M6.500 12L8 13.500 9.500 12" fill="none" stroke="#fff"/></svg>
<svg class="a" style="left:1873px;top:1031px;" width="15" height="14" viewBox="0 0 15 14"><circle cx="4" cy="3.500" r="3" fill="#fff"/><rect x="1" y="5" width="12.500" height="8.500" fill="#fff"/><rect x="6.500" y="1.500" width="7" height="3" fill="none" stroke="#fff"/><path d="M3 7.500H12M3 9.500H12M3 11.500H12" stroke="#19478a" stroke-dasharray="2 1"/></svg>
<svg class="a" style="left:3079px;top:1030px;" width="15" height="16" viewBox="0 0 15 16"><path d="M1 2H6Q7.500 2 7.500 3.500V13Q7.500 12 6 12H1ZM14 2H9Q7.500 2 7.500 3.500V13Q7.500 12 9 12H14Z" fill="none" stroke="#fff" stroke-width="1.100"/><path d="M2.500 4.500H6M2.500 6.500H6M2.500 8.500H6M9 4.500H12.500M9 6.500H12.500M9 8.500H12.500" stroke="#fff" stroke-width=".9"/><path d="M6 13L7.500 15 9 13" fill="#fff"/></svg>
<div class="a" style="left:3106px;top:1027px;width:38px;height:23px;background:#123569;"></div>
<svg class="a" style="left:3118px;top:1031px;" width="15" height="14" viewBox="0 0 15 14"><rect x=".600" y=".600" width="13.300" height="12.500" fill="none" stroke="#fff" stroke-width="1.200"/><path d="M2.500 3.500H12M2.500 5.700H12M2.500 7.900H12M2.500 10.100H12" stroke="#fff" stroke-width="1.100"/></svg>
<svg class="a" style="left:3155px;top:1030px;" width="16" height="16" viewBox="0 0 16 16"><path d="M1 1H11.500V6M1 1V12.500H6" fill="none" stroke="#fff" stroke-width="1.200"/><path d="M3 3.500H9.500M3 5.700H9.500M3 7.900H6.500" stroke="#fff"/><circle cx="10.800" cy="10.800" r="4" fill="#19478a" stroke="#fff" stroke-width="1.200"/><path d="M8 9.500Q10.800 11.500 13.500 9.500M10.800 7V14.500" fill="none" stroke="#fff" stroke-width=".8"/></svg>
<div class="a" style="left:3187px;top:1037px;width:6px;height:2px;background:#fff;"></div>
<div class="a" style="left:3196.7px;top:1037.5px;width:100px;height:1px;background:#fff;"></div>
<div class="a" style="left:3244.7px;top:1032px;width:4px;height:11px;background:#fff;"></div>
<div class="a" style="left:3301px;top:1037px;width:8px;height:2px;background:#fff;"></div>
<div class="a" style="left:3304px;top:1034px;width:2px;height:8px;background:#fff;"></div>
<span class="a t" style="left:3324.00px;top:1032.00px;line-height:14px;font:400 11.5px 'Liberation Sans', sans-serif;color:#fff;letter-spacing:-0.807px;">100%</span></div></div>
<div class="a" style="left:3344px;top:143px;width:16px;height:884px;background:#dadada;"></div>
<div class="a" style="left:3344px;top:145px;width:15px;height:14px;background:#fff;border:1px solid #ababab;box-sizing:border-box;"></div>
<svg class="a" style="left:3348px;top:150px;" width="7" height="4" viewBox="0 0 7 4"><path d="M0 4L3.500 0 7 4Z" fill="#555"/></svg>
<div class="a" style="left:3344px;top:313px;width:15px;height:669px;background:#fff;border:1px solid #ababab;box-sizing:border-box;"></div>
<div class="a" style="left:3344px;top:1010px;width:15px;height:14px;background:#fff;border:1px solid #ababab;box-sizing:border-box;"></div>
<svg class="a" style="left:3348px;top:1015px;" width="7" height="4" viewBox="0 0 7 4"><path d="M0 0H7L3.500 4Z" fill="#555"/></svg>
<div class="a" style="left:1680px;top:1027px;width:1680px;height:23px;background:#19478a;"></div>
<span class="a t" style="left:1687.00px;top:1032.00px;line-height:14px;font:400 11.5px 'Liberation Sans', sans-serif;color:#fff;letter-spacing:-0.745px;">PAGE 1 OF 1</span>
<span class="a t" style="left:1768.70px;top:1032.00px;line-height:14px;font:400 11.5px 'Liberation Sans', sans-serif;color:#fff;letter-spacing:-0.562px;">0 WORDS</span>
<svg class="a" style="left:1838px;top:1031px;" width="16" height="14" viewBox="0 0 16 14"><path d="M1.500 1.500H6.500Q8 1.500 8 3V11.500Q8 10 6.500 10H1.500ZM8 3Q8 1.500 9.500 1.500H10.500M8 11.500Q8 10 9.500 10H14.500V6" fill="none" stroke="#fff" stroke-width="1.200"/><path d="M10.300 4L12 5.800 15 1.500" fill="none" stroke="#fff" stroke-width="1.300"/><path d="M6.500 12L8 13.500 9.500 12" fill="none" stroke="#fff"/></svg>
<svg class="a" style="left:1873px;top:1031px;" width="15" height="14" viewBox="0 0 15 14"><circle cx="4" cy="3.500" r="3" fill="#fff"/><rect x="1" y="5" width="12.500" height="8.500" fill="#fff"/><rect x="6.500" y="1.500" width="7" height="3" fill="none" stroke="#fff"/><path d="M3 7.500H12M3 9.500H12M3 11.500H12" stroke="#19478a" stroke-dasharray="2 1"/></svg>
<svg class="a" style="left:3079px;top:1030px;" width="15" height="16" viewBox="0 0 15 16"><path d="M1 2H6Q7.500 2 7.500 3.500V13Q7.500 12 6 12H1ZM14 2H9Q7.500 2 7.500 3.500V13Q7.500 12 9 12H14Z" fill="none" stroke="#fff" stroke-width="1.100"/><path d="M2.500 4.500H6M2.500 6.500H6M2.500 8.500H6M9 4.500H12.500M9 6.500H12.500M9 8.500H12.500" stroke="#fff" stroke-width=".9"/><path d="M6 13L7.500 15 9 13" fill="#fff"/></svg>
<div class="a" style="left:3106px;top:1027px;width:38px;height:23px;background:#123569;"></div>
<svg class="a" style="left:3118px;top:1031px;" width="15" height="14" viewBox="0 0 15 14"><rect x=".600" y=".600" width="13.300" height="12.500" fill="none" stroke="#fff" stroke-width="1.200"/><path d="M2.500 3.500H12M2.500 5.700H12M2.500 7.900H12M2.500 10.100H12" stroke="#fff" stroke-width="1.100"/></svg>
<svg class="a" style="left:3155px;top:1030px;" width="16" height="16" viewBox="0 0 16 16"><path d="M1 1H11.500V6M1 1V12.500H6" fill="none" stroke="#fff" stroke-width="1.200"/><path d="M3 3.500H9.500M3 5.700H9.500M3 7.900H6.500" stroke="#fff"/><circle cx="10.800" cy="10.800" r="4" fill="#19478a" stroke="#fff" stroke-width="1.200"/><path d="M8 9.500Q10.800 11.500 13.500 9.500M10.800 7V14.500" fill="none" stroke="#fff" stroke-width=".8"/></svg>
<div class="a" style="left:3187px;top:1037px;width:6px;height:2px;background:#fff;"></div>
<div class="a" style="left:3196.7px;top:1037.5px;width:100px;height:1px;background:#fff;"></div>
<div class="a" style="left:3244.7px;top:1032px;width:4px;height:11px;background:#fff;"></div>
<div class="a" style="left:3301px;top:1037px;width:8px;height:2px;background:#fff;"></div>
<div class="a" style="left:3304px;top:1034px;width:2px;height:8px;background:#fff;"></div>
<span class="a t" style="left:3324.00px;top:1032.00px;line-height:14px;font:400 11.5px 'Liberation Sans', sans-serif;color:#fff;letter-spacing:-0.807px;">100%</span>
</body></html>
